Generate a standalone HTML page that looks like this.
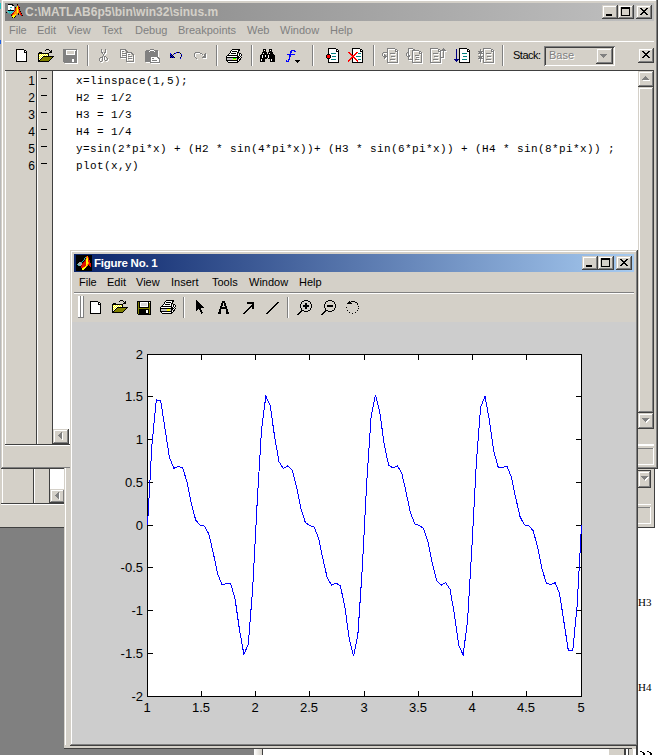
<!DOCTYPE html>
<html><head><meta charset="utf-8">
<style>
*{margin:0;padding:0;box-sizing:border-box}
html,body{width:658px;height:755px;overflow:hidden;background:#fff;position:relative;font-family:"Liberation Sans",sans-serif}
.a{position:absolute}
.t{white-space:pre;line-height:1}
.code{font-family:"Liberation Mono",monospace;font-size:11px;letter-spacing:0.4px;color:#000;white-space:pre;line-height:17px}
</style></head><body>
<div class="a" style="left:0px;top:0px;width:1px;height:470px;background:#b8b8b8;"></div>
<div class="a" style="left:0px;top:3px;width:1px;height:6px;background:#20c0c0;"></div>
<div class="a" style="left:0px;top:40px;width:1px;height:4px;background:#2060e0;"></div>
<div class="a" style="left:0px;top:527px;width:64px;height:228px;background:#808080;"></div>
<div class="a" style="left:0px;top:749px;width:254px;height:6px;background:#808080;"></div>
<div class="a" style="left:0px;top:468px;width:655px;height:60px;background:#d4d0c8;"></div>
<div class="a" style="left:654px;top:468px;width:1px;height:60px;background:#404040;"></div>
<div class="a" style="left:0px;top:527px;width:655px;height:1px;background:#404040;"></div>
<div class="a" style="left:2px;top:468px;width:1px;height:36px;background:#fff;"></div>
<div class="a" style="left:3px;top:468px;width:30px;height:35px;background:#d4d0c8;"></div>
<div class="a" style="left:33px;top:468px;width:1px;height:35px;background:#404040;"></div>
<div class="a" style="left:34px;top:468px;width:1px;height:35px;background:#fff;"></div>
<div class="a" style="left:49px;top:468px;width:1px;height:35px;background:#404040;"></div>
<div class="a" style="left:50px;top:468px;width:15px;height:35px;background:#fff;"></div>
<div class="a" style="left:50px;top:489px;width:15px;height:14px;background:#d4d0c8;box-shadow:inset -1px -1px #404040,inset 1px 1px #d4d0c8,inset -2px -2px #808080,inset 2px 2px #fff"></div>
<svg class="a" style="left:55px;top:492px" width="5" height="8" shape-rendering="crispEdges"><rect x="4" y="1" width="1" height="1" fill="#fff"/><rect x="3" y="2" width="2" height="1" fill="#fff"/><rect x="2" y="3" width="3" height="1" fill="#fff"/><rect x="1" y="4" width="4" height="1" fill="#fff"/><rect x="2" y="5" width="3" height="1" fill="#fff"/><rect x="3" y="6" width="2" height="1" fill="#fff"/><rect x="4" y="7" width="1" height="1" fill="#fff"/><rect x="3" y="0" width="1" height="1" fill="#808080"/><rect x="2" y="1" width="2" height="1" fill="#808080"/><rect x="1" y="2" width="3" height="1" fill="#808080"/><rect x="0" y="3" width="4" height="1" fill="#808080"/><rect x="1" y="4" width="3" height="1" fill="#808080"/><rect x="2" y="5" width="2" height="1" fill="#808080"/><rect x="3" y="6" width="1" height="1" fill="#808080"/></svg>
<div class="a" style="left:1px;top:503px;width:64px;height:1px;background:#404040;"></div>
<div class="a" style="left:1px;top:504px;width:64px;height:1px;background:#fff;"></div>
<div class="a" style="left:637px;top:470px;width:14px;height:1px;background:#404040;"></div>
<div class="a" style="left:638px;top:471px;width:13px;height:17px;background:#d4d0c8;box-shadow:inset -1px -1px #404040,inset 1px 1px #d4d0c8,inset -2px -2px #808080,inset 2px 2px #fff"></div>
<svg class="a" style="left:641px;top:476px" width="8" height="5" shape-rendering="crispEdges"><rect x="1" y="1" width="7" height="1" fill="#fff"/><rect x="2" y="2" width="5" height="1" fill="#fff"/><rect x="3" y="3" width="3" height="1" fill="#fff"/><rect x="4" y="4" width="1" height="1" fill="#fff"/><rect x="0" y="0" width="7" height="1" fill="#808080"/><rect x="1" y="1" width="5" height="1" fill="#808080"/><rect x="2" y="2" width="3" height="1" fill="#808080"/><rect x="3" y="3" width="1" height="1" fill="#808080"/></svg>
<div class="a" style="left:637px;top:504px;width:14px;height:1px;background:#fff;"></div>
<div class="a" style="left:637px;top:507px;width:13px;height:1px;background:#808080;"></div>
<div class="a" style="left:650px;top:507px;width:1px;height:17px;background:#fff;"></div>
<div class="a" style="left:637px;top:523px;width:14px;height:1px;background:#fff;"></div>
<div class="a" style="left:1px;top:0px;width:657px;height:469px;background:#d4d0c8;"></div>
<div class="a" style="left:2px;top:0px;width:655px;height:1px;background:#fff;"></div>
<div class="a" style="left:2px;top:0px;width:1px;height:467px;background:#fff;"></div>
<div class="a" style="left:656px;top:0px;width:1px;height:468px;background:#808080;"></div>
<div class="a" style="left:657px;top:0px;width:1px;height:469px;background:#404040;"></div>
<div class="a" style="left:2px;top:467px;width:655px;height:1px;background:#808080;"></div>
<div class="a" style="left:1px;top:468px;width:657px;height:1px;background:#404040;"></div>
<div class="a" style="left:5px;top:3px;width:649px;height:18px;background:linear-gradient(to right,#808080,#c0c0c0);"></div>
<div class="a t" style="left:25px;top:6px;font-size:12px;font-weight:bold;color:#d4d0c8">C:\MATLAB6p5\bin\win32\sinus.m</div>
<svg class="a" style="left:6px;top:4px" width="18" height="15" shape-rendering="crispEdges"><rect x="2" y="0" width="5" height="1" fill="#000"/><rect x="11" y="0" width="1" height="1" fill="#000"/><rect x="2" y="1" width="4" height="1" fill="#fff"/><rect x="6" y="1" width="2" height="1" fill="#000"/><rect x="11" y="1" width="1" height="1" fill="#a00000"/><rect x="2" y="2" width="6" height="1" fill="#fff"/><rect x="10" y="2" width="1" height="1" fill="#30b0b0"/><rect x="11" y="2" width="1" height="1" fill="#ffff00"/><rect x="12" y="2" width="1" height="1" fill="#e01000"/><rect x="2" y="3" width="2" height="1" fill="#fff"/><rect x="4" y="3" width="2" height="1" fill="#30b0b0"/><rect x="6" y="3" width="2" height="1" fill="#fff"/><rect x="9" y="3" width="1" height="1" fill="#000"/><rect x="10" y="3" width="1" height="1" fill="#ff9000"/><rect x="11" y="3" width="1" height="1" fill="#ffff00"/><rect x="12" y="3" width="1" height="1" fill="#e01000"/><rect x="13" y="3" width="1" height="1" fill="#000"/><rect x="2" y="4" width="6" height="1" fill="#fff"/><rect x="9" y="4" width="1" height="1" fill="#a00000"/><rect x="10" y="4" width="1" height="1" fill="#ff9000"/><rect x="11" y="4" width="1" height="1" fill="#ffff00"/><rect x="12" y="4" width="2" height="1" fill="#e01000"/><rect x="2" y="5" width="2" height="1" fill="#fff"/><rect x="4" y="5" width="1" height="1" fill="#30b0b0"/><rect x="5" y="5" width="3" height="1" fill="#fff"/><rect x="9" y="5" width="1" height="1" fill="#e01000"/><rect x="10" y="5" width="1" height="1" fill="#ff9000"/><rect x="11" y="5" width="1" height="1" fill="#ffff00"/><rect x="12" y="5" width="1" height="1" fill="#ff9000"/><rect x="13" y="5" width="1" height="1" fill="#000"/><rect x="2" y="6" width="6" height="1" fill="#000"/><rect x="9" y="6" width="1" height="1" fill="#e01000"/><rect x="10" y="6" width="1" height="1" fill="#ff9000"/><rect x="11" y="6" width="1" height="1" fill="#ffff00"/><rect x="12" y="6" width="1" height="1" fill="#ff9000"/><rect x="13" y="6" width="1" height="1" fill="#e01000"/><rect x="1" y="7" width="2" height="1" fill="#40d0d0"/><rect x="3" y="7" width="1" height="1" fill="#30b0b0"/><rect x="4" y="7" width="2" height="1" fill="#40d0d0"/><rect x="6" y="7" width="1" height="1" fill="#30b0b0"/><rect x="7" y="7" width="1" height="1" fill="#40d0d0"/><rect x="8" y="7" width="1" height="1" fill="#a00000"/><rect x="9" y="7" width="2" height="1" fill="#ff9000"/><rect x="11" y="7" width="1" height="1" fill="#ffff00"/><rect x="12" y="7" width="1" height="1" fill="#ff9000"/><rect x="13" y="7" width="1" height="1" fill="#e01000"/><rect x="14" y="7" width="1" height="1" fill="#000"/><rect x="0" y="8" width="1" height="1" fill="#000"/><rect x="2" y="8" width="1" height="1" fill="#40d0d0"/><rect x="3" y="8" width="1" height="1" fill="#30b0b0"/><rect x="4" y="8" width="1" height="1" fill="#40d0d0"/><rect x="5" y="8" width="1" height="1" fill="#30b0b0"/><rect x="6" y="8" width="1" height="1" fill="#40d0d0"/><rect x="7" y="8" width="1" height="1" fill="#e01000"/><rect x="8" y="8" width="3" height="1" fill="#ff9000"/><rect x="11" y="8" width="1" height="1" fill="#ffff00"/><rect x="12" y="8" width="1" height="1" fill="#ff9000"/><rect x="13" y="8" width="2" height="1" fill="#e01000"/><rect x="3" y="9" width="2" height="1" fill="#30b0b0"/><rect x="5" y="9" width="1" height="1" fill="#40d0d0"/><rect x="6" y="9" width="1" height="1" fill="#a00000"/><rect x="7" y="9" width="1" height="1" fill="#e01000"/><rect x="8" y="9" width="4" height="1" fill="#ff9000"/><rect x="12" y="9" width="1" height="1" fill="#000"/><rect x="13" y="9" width="1" height="1" fill="#ff9000"/><rect x="14" y="9" width="1" height="1" fill="#e01000"/><rect x="15" y="9" width="1" height="1" fill="#000"/><rect x="5" y="10" width="1" height="1" fill="#a00000"/><rect x="6" y="10" width="1" height="1" fill="#e01000"/><rect x="7" y="10" width="2" height="1" fill="#ff9000"/><rect x="9" y="10" width="1" height="1" fill="#ffff00"/><rect x="10" y="10" width="1" height="1" fill="#ff9000"/><rect x="12" y="10" width="1" height="1" fill="#000"/><rect x="14" y="10" width="2" height="1" fill="#e01000"/><rect x="5" y="11" width="1" height="1" fill="#000"/><rect x="6" y="11" width="1" height="1" fill="#ff9000"/><rect x="7" y="11" width="2" height="1" fill="#ffff00"/><rect x="9" y="11" width="1" height="1" fill="#ff9000"/><rect x="15" y="11" width="1" height="1" fill="#a00000"/><rect x="16" y="11" width="1" height="1" fill="#000"/><rect x="6" y="12" width="3" height="1" fill="#ffff00"/><rect x="9" y="12" width="1" height="1" fill="#000"/><rect x="6" y="13" width="1" height="1" fill="#000"/><rect x="7" y="13" width="1" height="1" fill="#ffff00"/><rect x="8" y="13" width="1" height="1" fill="#000"/></svg>
<div class="a" style="left:602px;top:5px;width:16px;height:14px;background:#d4d0c8;box-shadow:inset -1px -1px #404040,inset 1px 1px #d4d0c8,inset -2px -2px #808080,inset 2px 2px #fff"></div>
<div class="a" style="left:618px;top:5px;width:16px;height:14px;background:#d4d0c8;box-shadow:inset -1px -1px #404040,inset 1px 1px #d4d0c8,inset -2px -2px #808080,inset 2px 2px #fff"></div>
<div class="a" style="left:636px;top:5px;width:16px;height:14px;background:#d4d0c8;box-shadow:inset -1px -1px #404040,inset 1px 1px #d4d0c8,inset -2px -2px #808080,inset 2px 2px #fff"></div>
<div class="a" style="left:606px;top:14px;width:6px;height:2px;background:#000;"></div>
<div class="a" style="left:621px;top:7px;width:9px;height:9px;border:1px solid #000;border-top-width:2px"></div>
<svg class="a" style="left:640px;top:8px" width="9" height="8" shape-rendering="crispEdges"><rect x="0" y="0" width="2" height="1" fill="#000"/><rect x="6" y="0" width="2" height="1" fill="#000"/><rect x="1" y="1" width="2" height="1" fill="#000"/><rect x="5" y="1" width="2" height="1" fill="#000"/><rect x="2" y="2" width="4" height="1" fill="#000"/><rect x="3" y="3" width="2" height="1" fill="#000"/><rect x="2" y="4" width="4" height="1" fill="#000"/><rect x="1" y="5" width="2" height="1" fill="#000"/><rect x="5" y="5" width="2" height="1" fill="#000"/><rect x="0" y="6" width="2" height="1" fill="#000"/><rect x="6" y="6" width="2" height="1" fill="#000"/></svg>
<div class="a t" style="left:9px;top:25px;font-size:11px;color:#808080">File</div>
<div class="a t" style="left:37px;top:25px;font-size:11px;color:#808080">Edit</div>
<div class="a t" style="left:67px;top:25px;font-size:11px;color:#808080">View</div>
<div class="a t" style="left:102px;top:25px;font-size:11px;color:#808080">Text</div>
<div class="a t" style="left:135px;top:25px;font-size:11px;color:#808080">Debug</div>
<div class="a t" style="left:178px;top:25px;font-size:11px;color:#808080">Breakpoints</div>
<div class="a t" style="left:247px;top:25px;font-size:11px;color:#808080">Web</div>
<div class="a t" style="left:280px;top:25px;font-size:11px;color:#808080">Window</div>
<div class="a t" style="left:330px;top:25px;font-size:11px;color:#808080">Help</div>
<div class="a" style="left:5px;top:41px;width:649px;height:1px;background:#fff;"></div>
<div class="a" style="left:87px;top:45px;width:1px;height:21px;background:#808080;"></div>
<div class="a" style="left:88px;top:45px;width:1px;height:21px;background:#fff;"></div>
<div class="a" style="left:216px;top:45px;width:1px;height:21px;background:#808080;"></div>
<div class="a" style="left:217px;top:45px;width:1px;height:21px;background:#fff;"></div>
<div class="a" style="left:251px;top:45px;width:1px;height:21px;background:#808080;"></div>
<div class="a" style="left:252px;top:45px;width:1px;height:21px;background:#fff;"></div>
<div class="a" style="left:312px;top:45px;width:1px;height:21px;background:#808080;"></div>
<div class="a" style="left:313px;top:45px;width:1px;height:21px;background:#fff;"></div>
<div class="a" style="left:373px;top:45px;width:1px;height:21px;background:#808080;"></div>
<div class="a" style="left:374px;top:45px;width:1px;height:21px;background:#fff;"></div>
<div class="a" style="left:502px;top:45px;width:1px;height:21px;background:#808080;"></div>
<div class="a" style="left:503px;top:45px;width:1px;height:21px;background:#fff;"></div>
<svg class="a" style="left:16px;top:49px" width="12" height="14" shape-rendering="crispEdges"><rect x="0" y="0" width="8" height="1" fill="#000"/><rect x="0" y="1" width="1" height="1" fill="#000"/><rect x="1" y="1" width="7" height="1" fill="#fff"/><rect x="8" y="1" width="2" height="1" fill="#000"/><rect x="0" y="2" width="1" height="1" fill="#000"/><rect x="1" y="2" width="7" height="1" fill="#fff"/><rect x="8" y="2" width="1" height="1" fill="#000"/><rect x="9" y="2" width="1" height="1" fill="#fff"/><rect x="10" y="2" width="1" height="1" fill="#000"/><rect x="0" y="3" width="1" height="1" fill="#000"/><rect x="1" y="3" width="7" height="1" fill="#fff"/><rect x="8" y="3" width="3" height="1" fill="#000"/><rect x="0" y="4" width="1" height="1" fill="#000"/><rect x="1" y="4" width="9" height="1" fill="#fff"/><rect x="10" y="4" width="1" height="1" fill="#000"/><rect x="0" y="5" width="1" height="1" fill="#000"/><rect x="1" y="5" width="9" height="1" fill="#fff"/><rect x="10" y="5" width="1" height="1" fill="#000"/><rect x="0" y="6" width="1" height="1" fill="#000"/><rect x="1" y="6" width="9" height="1" fill="#fff"/><rect x="10" y="6" width="1" height="1" fill="#000"/><rect x="0" y="7" width="1" height="1" fill="#000"/><rect x="1" y="7" width="9" height="1" fill="#fff"/><rect x="10" y="7" width="1" height="1" fill="#000"/><rect x="0" y="8" width="1" height="1" fill="#000"/><rect x="1" y="8" width="9" height="1" fill="#fff"/><rect x="10" y="8" width="1" height="1" fill="#000"/><rect x="0" y="9" width="1" height="1" fill="#000"/><rect x="1" y="9" width="9" height="1" fill="#fff"/><rect x="10" y="9" width="1" height="1" fill="#000"/><rect x="0" y="10" width="1" height="1" fill="#000"/><rect x="1" y="10" width="9" height="1" fill="#fff"/><rect x="10" y="10" width="1" height="1" fill="#000"/><rect x="0" y="11" width="1" height="1" fill="#000"/><rect x="1" y="11" width="9" height="1" fill="#fff"/><rect x="10" y="11" width="1" height="1" fill="#000"/><rect x="0" y="12" width="11" height="1" fill="#000"/></svg>
<svg class="a" style="left:38px;top:49px" width="17" height="14" shape-rendering="crispEdges"><rect x="8" y="0" width="3" height="1" fill="#000"/><rect x="7" y="1" width="1" height="1" fill="#000"/><rect x="11" y="1" width="1" height="1" fill="#000"/><rect x="13" y="1" width="1" height="1" fill="#000"/><rect x="12" y="2" width="2" height="1" fill="#000"/><rect x="1" y="3" width="3" height="1" fill="#000"/><rect x="11" y="3" width="3" height="1" fill="#000"/><rect x="0" y="4" width="11" height="1" fill="#000"/><rect x="0" y="5" width="1" height="1" fill="#000"/><rect x="1" y="5" width="1" height="1" fill="#ffff00"/><rect x="2" y="5" width="1" height="1" fill="#fff"/><rect x="3" y="5" width="1" height="1" fill="#ffff00"/><rect x="4" y="5" width="1" height="1" fill="#fff"/><rect x="5" y="5" width="1" height="1" fill="#ffff00"/><rect x="6" y="5" width="1" height="1" fill="#fff"/><rect x="7" y="5" width="1" height="1" fill="#ffff00"/><rect x="8" y="5" width="1" height="1" fill="#fff"/><rect x="9" y="5" width="1" height="1" fill="#ffff00"/><rect x="10" y="5" width="1" height="1" fill="#000"/><rect x="0" y="6" width="1" height="1" fill="#000"/><rect x="1" y="6" width="1" height="1" fill="#fff"/><rect x="2" y="6" width="1" height="1" fill="#ffff00"/><rect x="3" y="6" width="1" height="1" fill="#fff"/><rect x="4" y="6" width="1" height="1" fill="#ffff00"/><rect x="5" y="6" width="1" height="1" fill="#fff"/><rect x="6" y="6" width="1" height="1" fill="#ffff00"/><rect x="7" y="6" width="1" height="1" fill="#fff"/><rect x="8" y="6" width="1" height="1" fill="#ffff00"/><rect x="9" y="6" width="1" height="1" fill="#fff"/><rect x="10" y="6" width="1" height="1" fill="#000"/><rect x="0" y="7" width="1" height="1" fill="#000"/><rect x="1" y="7" width="1" height="1" fill="#ffff00"/><rect x="2" y="7" width="1" height="1" fill="#fff"/><rect x="3" y="7" width="1" height="1" fill="#ffff00"/><rect x="4" y="7" width="1" height="1" fill="#fff"/><rect x="5" y="7" width="11" height="1" fill="#000"/><rect x="0" y="8" width="1" height="1" fill="#000"/><rect x="1" y="8" width="1" height="1" fill="#fff"/><rect x="2" y="8" width="1" height="1" fill="#ffff00"/><rect x="3" y="8" width="1" height="1" fill="#fff"/><rect x="4" y="8" width="1" height="1" fill="#000"/><rect x="5" y="8" width="9" height="1" fill="#808000"/><rect x="14" y="8" width="1" height="1" fill="#000"/><rect x="0" y="9" width="1" height="1" fill="#000"/><rect x="1" y="9" width="1" height="1" fill="#ffff00"/><rect x="2" y="9" width="1" height="1" fill="#fff"/><rect x="3" y="9" width="1" height="1" fill="#000"/><rect x="4" y="9" width="9" height="1" fill="#808000"/><rect x="13" y="9" width="1" height="1" fill="#000"/><rect x="0" y="10" width="1" height="1" fill="#000"/><rect x="1" y="10" width="1" height="1" fill="#fff"/><rect x="2" y="10" width="1" height="1" fill="#000"/><rect x="3" y="10" width="9" height="1" fill="#808000"/><rect x="12" y="10" width="1" height="1" fill="#000"/><rect x="0" y="11" width="2" height="1" fill="#000"/><rect x="2" y="11" width="9" height="1" fill="#808000"/><rect x="11" y="11" width="1" height="1" fill="#000"/><rect x="0" y="12" width="11" height="1" fill="#000"/></svg>
<svg class="a" style="left:63px;top:49px" width="16" height="16" shape-rendering="crispEdges"><rect x="0" y="0" width="14" height="1" fill="#808080"/><rect x="0" y="1" width="3" height="1" fill="#808080"/><rect x="3" y="1" width="10" height="1" fill="#fff"/><rect x="13" y="1" width="1" height="1" fill="#808080"/><rect x="14" y="1" width="1" height="1" fill="#fff"/><rect x="0" y="2" width="3" height="1" fill="#808080"/><rect x="3" y="2" width="1" height="1" fill="#fff"/><rect x="4" y="2" width="7" height="1" fill="#d4d0c8"/><rect x="11" y="2" width="1" height="1" fill="#fff"/><rect x="12" y="2" width="2" height="1" fill="#808080"/><rect x="14" y="2" width="1" height="1" fill="#fff"/><rect x="0" y="3" width="3" height="1" fill="#808080"/><rect x="3" y="3" width="1" height="1" fill="#fff"/><rect x="4" y="3" width="7" height="1" fill="#d4d0c8"/><rect x="11" y="3" width="1" height="1" fill="#fff"/><rect x="12" y="3" width="2" height="1" fill="#808080"/><rect x="14" y="3" width="1" height="1" fill="#fff"/><rect x="0" y="4" width="3" height="1" fill="#808080"/><rect x="3" y="4" width="1" height="1" fill="#fff"/><rect x="4" y="4" width="7" height="1" fill="#d4d0c8"/><rect x="11" y="4" width="1" height="1" fill="#fff"/><rect x="12" y="4" width="2" height="1" fill="#808080"/><rect x="14" y="4" width="1" height="1" fill="#fff"/><rect x="0" y="5" width="3" height="1" fill="#808080"/><rect x="3" y="5" width="9" height="1" fill="#fff"/><rect x="12" y="5" width="2" height="1" fill="#808080"/><rect x="14" y="5" width="1" height="1" fill="#fff"/><rect x="0" y="6" width="14" height="1" fill="#808080"/><rect x="14" y="6" width="1" height="1" fill="#fff"/><rect x="0" y="7" width="14" height="1" fill="#808080"/><rect x="14" y="7" width="1" height="1" fill="#fff"/><rect x="0" y="8" width="14" height="1" fill="#808080"/><rect x="14" y="8" width="1" height="1" fill="#fff"/><rect x="0" y="9" width="14" height="1" fill="#808080"/><rect x="14" y="9" width="1" height="1" fill="#fff"/><rect x="0" y="10" width="9" height="1" fill="#808080"/><rect x="9" y="10" width="2" height="1" fill="#fff"/><rect x="11" y="10" width="3" height="1" fill="#808080"/><rect x="14" y="10" width="1" height="1" fill="#fff"/><rect x="0" y="11" width="9" height="1" fill="#808080"/><rect x="9" y="11" width="2" height="1" fill="#fff"/><rect x="11" y="11" width="3" height="1" fill="#808080"/><rect x="14" y="11" width="1" height="1" fill="#fff"/><rect x="0" y="12" width="9" height="1" fill="#808080"/><rect x="9" y="12" width="2" height="1" fill="#fff"/><rect x="11" y="12" width="3" height="1" fill="#808080"/><rect x="14" y="12" width="1" height="1" fill="#fff"/><rect x="1" y="13" width="13" height="1" fill="#808080"/><rect x="14" y="13" width="1" height="1" fill="#fff"/><rect x="2" y="14" width="13" height="1" fill="#fff"/></svg>
<svg class="a" style="left:99px;top:49px" width="10" height="14" shape-rendering="crispEdges"><rect x="3" y="1" width="1" height="1" fill="#fff"/><rect x="7" y="1" width="1" height="1" fill="#fff"/><rect x="3" y="2" width="1" height="1" fill="#fff"/><rect x="7" y="2" width="1" height="1" fill="#fff"/><rect x="3" y="3" width="1" height="1" fill="#fff"/><rect x="7" y="3" width="1" height="1" fill="#fff"/><rect x="3" y="4" width="2" height="1" fill="#fff"/><rect x="6" y="4" width="2" height="1" fill="#fff"/><rect x="4" y="5" width="1" height="1" fill="#fff"/><rect x="6" y="5" width="1" height="1" fill="#fff"/><rect x="5" y="6" width="1" height="1" fill="#fff"/><rect x="5" y="7" width="1" height="1" fill="#fff"/><rect x="4" y="8" width="1" height="1" fill="#fff"/><rect x="6" y="8" width="2" height="1" fill="#fff"/><rect x="2" y="9" width="3" height="1" fill="#fff"/><rect x="6" y="9" width="1" height="1" fill="#fff"/><rect x="8" y="9" width="1" height="1" fill="#fff"/><rect x="1" y="10" width="1" height="1" fill="#fff"/><rect x="4" y="10" width="1" height="1" fill="#fff"/><rect x="6" y="10" width="1" height="1" fill="#fff"/><rect x="9" y="10" width="1" height="1" fill="#fff"/><rect x="1" y="11" width="1" height="1" fill="#fff"/><rect x="4" y="11" width="1" height="1" fill="#fff"/><rect x="6" y="11" width="1" height="1" fill="#fff"/><rect x="9" y="11" width="1" height="1" fill="#fff"/><rect x="1" y="12" width="1" height="1" fill="#fff"/><rect x="4" y="12" width="1" height="1" fill="#fff"/><rect x="7" y="12" width="2" height="1" fill="#fff"/><rect x="2" y="13" width="2" height="1" fill="#fff"/><rect x="2" y="0" width="1" height="1" fill="#808080"/><rect x="6" y="0" width="1" height="1" fill="#808080"/><rect x="2" y="1" width="1" height="1" fill="#808080"/><rect x="6" y="1" width="1" height="1" fill="#808080"/><rect x="2" y="2" width="1" height="1" fill="#808080"/><rect x="6" y="2" width="1" height="1" fill="#808080"/><rect x="2" y="3" width="2" height="1" fill="#808080"/><rect x="5" y="3" width="2" height="1" fill="#808080"/><rect x="3" y="4" width="1" height="1" fill="#808080"/><rect x="5" y="4" width="1" height="1" fill="#808080"/><rect x="4" y="5" width="1" height="1" fill="#808080"/><rect x="4" y="6" width="1" height="1" fill="#808080"/><rect x="3" y="7" width="1" height="1" fill="#808080"/><rect x="5" y="7" width="2" height="1" fill="#808080"/><rect x="1" y="8" width="3" height="1" fill="#808080"/><rect x="5" y="8" width="1" height="1" fill="#808080"/><rect x="7" y="8" width="1" height="1" fill="#808080"/><rect x="0" y="9" width="1" height="1" fill="#808080"/><rect x="3" y="9" width="1" height="1" fill="#808080"/><rect x="5" y="9" width="1" height="1" fill="#808080"/><rect x="8" y="9" width="1" height="1" fill="#808080"/><rect x="0" y="10" width="1" height="1" fill="#808080"/><rect x="3" y="10" width="1" height="1" fill="#808080"/><rect x="5" y="10" width="1" height="1" fill="#808080"/><rect x="8" y="10" width="1" height="1" fill="#808080"/><rect x="0" y="11" width="1" height="1" fill="#808080"/><rect x="3" y="11" width="1" height="1" fill="#808080"/><rect x="6" y="11" width="2" height="1" fill="#808080"/><rect x="1" y="12" width="2" height="1" fill="#808080"/></svg>
<svg class="a" style="left:120px;top:49px" width="16" height="14" shape-rendering="crispEdges"><rect x="1" y="1" width="6" height="1" fill="#fff"/><rect x="1" y="2" width="1" height="1" fill="#fff"/><rect x="6" y="2" width="2" height="1" fill="#fff"/><rect x="1" y="3" width="1" height="1" fill="#fff"/><rect x="3" y="3" width="2" height="1" fill="#fff"/><rect x="7" y="3" width="2" height="1" fill="#fff"/><rect x="1" y="4" width="1" height="1" fill="#fff"/><rect x="7" y="4" width="6" height="1" fill="#fff"/><rect x="1" y="5" width="1" height="1" fill="#fff"/><rect x="3" y="5" width="5" height="1" fill="#fff"/><rect x="12" y="5" width="2" height="1" fill="#fff"/><rect x="1" y="6" width="1" height="1" fill="#fff"/><rect x="7" y="6" width="1" height="1" fill="#fff"/><rect x="9" y="6" width="2" height="1" fill="#fff"/><rect x="13" y="6" width="2" height="1" fill="#fff"/><rect x="1" y="7" width="1" height="1" fill="#fff"/><rect x="3" y="7" width="5" height="1" fill="#fff"/><rect x="14" y="7" width="1" height="1" fill="#fff"/><rect x="1" y="8" width="1" height="1" fill="#fff"/><rect x="7" y="8" width="1" height="1" fill="#fff"/><rect x="9" y="8" width="4" height="1" fill="#fff"/><rect x="14" y="8" width="1" height="1" fill="#fff"/><rect x="1" y="9" width="7" height="1" fill="#fff"/><rect x="14" y="9" width="1" height="1" fill="#fff"/><rect x="7" y="10" width="1" height="1" fill="#fff"/><rect x="9" y="10" width="4" height="1" fill="#fff"/><rect x="14" y="10" width="1" height="1" fill="#fff"/><rect x="7" y="11" width="1" height="1" fill="#fff"/><rect x="14" y="11" width="1" height="1" fill="#fff"/><rect x="7" y="12" width="1" height="1" fill="#fff"/><rect x="14" y="12" width="1" height="1" fill="#fff"/><rect x="7" y="13" width="8" height="1" fill="#fff"/><rect x="0" y="0" width="6" height="1" fill="#808080"/><rect x="0" y="1" width="1" height="1" fill="#808080"/><rect x="5" y="1" width="2" height="1" fill="#808080"/><rect x="0" y="2" width="1" height="1" fill="#808080"/><rect x="2" y="2" width="2" height="1" fill="#808080"/><rect x="6" y="2" width="2" height="1" fill="#808080"/><rect x="0" y="3" width="1" height="1" fill="#808080"/><rect x="6" y="3" width="6" height="1" fill="#808080"/><rect x="0" y="4" width="1" height="1" fill="#808080"/><rect x="2" y="4" width="5" height="1" fill="#808080"/><rect x="11" y="4" width="2" height="1" fill="#808080"/><rect x="0" y="5" width="1" height="1" fill="#808080"/><rect x="6" y="5" width="1" height="1" fill="#808080"/><rect x="8" y="5" width="2" height="1" fill="#808080"/><rect x="12" y="5" width="2" height="1" fill="#808080"/><rect x="0" y="6" width="1" height="1" fill="#808080"/><rect x="2" y="6" width="5" height="1" fill="#808080"/><rect x="13" y="6" width="1" height="1" fill="#808080"/><rect x="0" y="7" width="1" height="1" fill="#808080"/><rect x="6" y="7" width="1" height="1" fill="#808080"/><rect x="8" y="7" width="4" height="1" fill="#808080"/><rect x="13" y="7" width="1" height="1" fill="#808080"/><rect x="0" y="8" width="7" height="1" fill="#808080"/><rect x="13" y="8" width="1" height="1" fill="#808080"/><rect x="6" y="9" width="1" height="1" fill="#808080"/><rect x="8" y="9" width="4" height="1" fill="#808080"/><rect x="13" y="9" width="1" height="1" fill="#808080"/><rect x="6" y="10" width="1" height="1" fill="#808080"/><rect x="13" y="10" width="1" height="1" fill="#808080"/><rect x="6" y="11" width="1" height="1" fill="#808080"/><rect x="13" y="11" width="1" height="1" fill="#808080"/><rect x="6" y="12" width="8" height="1" fill="#808080"/></svg>
<svg class="a" style="left:144px;top:49px" width="17" height="16" shape-rendering="crispEdges"><rect x="6" y="0" width="4" height="1" fill="#808080"/><rect x="2" y="1" width="4" height="1" fill="#808080"/><rect x="6" y="1" width="4" height="1" fill="#fff"/><rect x="10" y="1" width="4" height="1" fill="#808080"/><rect x="1" y="2" width="4" height="1" fill="#808080"/><rect x="5" y="2" width="1" height="1" fill="#fff"/><rect x="6" y="2" width="4" height="1" fill="#808080"/><rect x="10" y="2" width="1" height="1" fill="#fff"/><rect x="11" y="2" width="3" height="1" fill="#808080"/><rect x="14" y="2" width="1" height="1" fill="#fff"/><rect x="1" y="3" width="13" height="1" fill="#808080"/><rect x="14" y="3" width="1" height="1" fill="#fff"/><rect x="1" y="4" width="13" height="1" fill="#808080"/><rect x="14" y="4" width="1" height="1" fill="#fff"/><rect x="1" y="5" width="13" height="1" fill="#808080"/><rect x="14" y="5" width="1" height="1" fill="#fff"/><rect x="1" y="6" width="13" height="1" fill="#808080"/><rect x="14" y="6" width="1" height="1" fill="#fff"/><rect x="1" y="7" width="13" height="1" fill="#808080"/><rect x="14" y="7" width="1" height="1" fill="#fff"/><rect x="1" y="8" width="6" height="1" fill="#808080"/><rect x="7" y="8" width="6" height="1" fill="#fff"/><rect x="13" y="8" width="2" height="1" fill="#808080"/><rect x="1" y="9" width="6" height="1" fill="#808080"/><rect x="7" y="9" width="1" height="1" fill="#fff"/><rect x="8" y="9" width="2" height="1" fill="#808080"/><rect x="10" y="9" width="4" height="1" fill="#fff"/><rect x="14" y="9" width="2" height="1" fill="#808080"/><rect x="1" y="10" width="6" height="1" fill="#808080"/><rect x="7" y="10" width="8" height="1" fill="#fff"/><rect x="15" y="10" width="1" height="1" fill="#808080"/><rect x="1" y="11" width="6" height="1" fill="#808080"/><rect x="7" y="11" width="1" height="1" fill="#fff"/><rect x="8" y="11" width="5" height="1" fill="#808080"/><rect x="13" y="11" width="2" height="1" fill="#fff"/><rect x="15" y="11" width="1" height="1" fill="#808080"/><rect x="1" y="12" width="6" height="1" fill="#808080"/><rect x="7" y="12" width="8" height="1" fill="#fff"/><rect x="15" y="12" width="1" height="1" fill="#808080"/><rect x="2" y="13" width="4" height="1" fill="#fff"/><rect x="6" y="13" width="10" height="1" fill="#808080"/><rect x="7" y="14" width="9" height="1" fill="#fff"/></svg>
<svg class="a" style="left:170px;top:52px" width="13" height="8" shape-rendering="crispEdges"><rect x="6" y="0" width="1" height="1" fill="#0000ff"/><rect x="7" y="0" width="2" height="1" fill="#000"/><rect x="9" y="0" width="1" height="1" fill="#0000ff"/><rect x="0" y="1" width="1" height="1" fill="#0000ff"/><rect x="4" y="1" width="1" height="1" fill="#000"/><rect x="5" y="1" width="1" height="1" fill="#0000ff"/><rect x="10" y="1" width="1" height="1" fill="#000"/><rect x="0" y="2" width="1" height="1" fill="#0000ff"/><rect x="1" y="2" width="1" height="1" fill="#000"/><rect x="3" y="2" width="1" height="1" fill="#0000ff"/><rect x="11" y="2" width="1" height="1" fill="#0000ff"/><rect x="0" y="3" width="1" height="1" fill="#000"/><rect x="1" y="3" width="1" height="1" fill="#0000ff"/><rect x="2" y="3" width="1" height="1" fill="#000"/><rect x="11" y="3" width="1" height="1" fill="#000"/><rect x="0" y="4" width="1" height="1" fill="#0000ff"/><rect x="1" y="4" width="1" height="1" fill="#000"/><rect x="2" y="4" width="1" height="1" fill="#0000ff"/><rect x="3" y="4" width="1" height="1" fill="#000"/><rect x="11" y="4" width="1" height="1" fill="#0000ff"/><rect x="0" y="5" width="1" height="1" fill="#000"/><rect x="1" y="5" width="1" height="1" fill="#0000ff"/><rect x="2" y="5" width="1" height="1" fill="#000"/><rect x="3" y="5" width="1" height="1" fill="#0000ff"/><rect x="4" y="5" width="1" height="1" fill="#000"/><rect x="10" y="5" width="1" height="1" fill="#000"/><rect x="10" y="6" width="1" height="1" fill="#0000ff"/></svg>
<svg class="a" style="left:194px;top:52px" width="13" height="8" shape-rendering="crispEdges"><rect x="2" y="1" width="5" height="1" fill="#fff"/><rect x="1" y="2" width="1" height="1" fill="#fff"/><rect x="7" y="2" width="2" height="1" fill="#fff"/><rect x="12" y="2" width="1" height="1" fill="#fff"/><rect x="1" y="3" width="1" height="1" fill="#fff"/><rect x="9" y="3" width="1" height="1" fill="#fff"/><rect x="11" y="3" width="2" height="1" fill="#fff"/><rect x="1" y="4" width="1" height="1" fill="#fff"/><rect x="11" y="4" width="2" height="1" fill="#fff"/><rect x="1" y="5" width="1" height="1" fill="#fff"/><rect x="10" y="5" width="3" height="1" fill="#fff"/><rect x="2" y="6" width="1" height="1" fill="#fff"/><rect x="9" y="6" width="4" height="1" fill="#fff"/><rect x="3" y="7" width="1" height="1" fill="#fff"/><rect x="1" y="0" width="5" height="1" fill="#808080"/><rect x="0" y="1" width="1" height="1" fill="#808080"/><rect x="6" y="1" width="2" height="1" fill="#808080"/><rect x="11" y="1" width="1" height="1" fill="#808080"/><rect x="0" y="2" width="1" height="1" fill="#808080"/><rect x="8" y="2" width="1" height="1" fill="#808080"/><rect x="10" y="2" width="2" height="1" fill="#808080"/><rect x="0" y="3" width="1" height="1" fill="#808080"/><rect x="10" y="3" width="2" height="1" fill="#808080"/><rect x="0" y="4" width="1" height="1" fill="#808080"/><rect x="9" y="4" width="3" height="1" fill="#808080"/><rect x="1" y="5" width="1" height="1" fill="#808080"/><rect x="8" y="5" width="4" height="1" fill="#808080"/><rect x="2" y="6" width="1" height="1" fill="#808080"/></svg>
<svg class="a" style="left:226px;top:49px" width="17" height="15" shape-rendering="crispEdges"><rect x="6" y="0" width="8" height="1" fill="#000"/><rect x="5" y="1" width="1" height="1" fill="#000"/><rect x="6" y="1" width="6" height="1" fill="#fff"/><rect x="12" y="1" width="2" height="1" fill="#000"/><rect x="4" y="2" width="1" height="1" fill="#000"/><rect x="5" y="2" width="1" height="1" fill="#fff"/><rect x="6" y="2" width="5" height="1" fill="#000"/><rect x="11" y="2" width="1" height="1" fill="#fff"/><rect x="12" y="2" width="1" height="1" fill="#000"/><rect x="4" y="3" width="1" height="1" fill="#000"/><rect x="5" y="3" width="6" height="1" fill="#fff"/><rect x="11" y="3" width="2" height="1" fill="#000"/><rect x="3" y="4" width="1" height="1" fill="#000"/><rect x="4" y="4" width="1" height="1" fill="#fff"/><rect x="5" y="4" width="5" height="1" fill="#000"/><rect x="10" y="4" width="1" height="1" fill="#fff"/><rect x="11" y="4" width="1" height="1" fill="#000"/><rect x="13" y="4" width="2" height="1" fill="#000"/><rect x="2" y="5" width="1" height="1" fill="#000"/><rect x="3" y="5" width="8" height="1" fill="#fff"/><rect x="11" y="5" width="1" height="1" fill="#000"/><rect x="12" y="5" width="1" height="1" fill="#fff"/><rect x="13" y="5" width="1" height="1" fill="#000"/><rect x="14" y="5" width="1" height="1" fill="#fff"/><rect x="15" y="5" width="1" height="1" fill="#000"/><rect x="1" y="6" width="11" height="1" fill="#000"/><rect x="12" y="6" width="1" height="1" fill="#fff"/><rect x="13" y="6" width="1" height="1" fill="#000"/><rect x="14" y="6" width="1" height="1" fill="#fff"/><rect x="15" y="6" width="1" height="1" fill="#000"/><rect x="0" y="7" width="1" height="1" fill="#000"/><rect x="1" y="7" width="10" height="1" fill="#fff"/><rect x="11" y="7" width="2" height="1" fill="#000"/><rect x="13" y="7" width="1" height="1" fill="#fff"/><rect x="14" y="7" width="1" height="1" fill="#000"/><rect x="0" y="8" width="14" height="1" fill="#000"/><rect x="14" y="8" width="1" height="1" fill="#fff"/><rect x="15" y="8" width="1" height="1" fill="#000"/><rect x="0" y="9" width="1" height="1" fill="#000"/><rect x="1" y="9" width="6" height="1" fill="#c0c0c0"/><rect x="7" y="9" width="3" height="1" fill="#00ff00"/><rect x="10" y="9" width="1" height="1" fill="#c0c0c0"/><rect x="11" y="9" width="2" height="1" fill="#000"/><rect x="13" y="9" width="1" height="1" fill="#fff"/><rect x="14" y="9" width="1" height="1" fill="#000"/><rect x="0" y="10" width="1" height="1" fill="#000"/><rect x="1" y="10" width="6" height="1" fill="#c0c0c0"/><rect x="7" y="10" width="3" height="1" fill="#ffff00"/><rect x="10" y="10" width="1" height="1" fill="#c0c0c0"/><rect x="11" y="10" width="1" height="1" fill="#000"/><rect x="13" y="10" width="2" height="1" fill="#000"/><rect x="0" y="11" width="12" height="1" fill="#000"/><rect x="12" y="11" width="1" height="1" fill="#fff"/><rect x="13" y="11" width="1" height="1" fill="#000"/><rect x="1" y="12" width="1" height="1" fill="#000"/><rect x="2" y="12" width="9" height="1" fill="#fff"/><rect x="11" y="12" width="2" height="1" fill="#000"/><rect x="2" y="13" width="10" height="1" fill="#000"/></svg>
<svg class="a" style="left:260px;top:49px" width="16" height="14" shape-rendering="crispEdges"><rect x="3" y="0" width="3" height="1" fill="#000"/><rect x="9" y="0" width="3" height="1" fill="#000"/><rect x="3" y="1" width="1" height="1" fill="#000"/><rect x="4" y="1" width="1" height="1" fill="#fff"/><rect x="5" y="1" width="1" height="1" fill="#000"/><rect x="9" y="1" width="1" height="1" fill="#000"/><rect x="10" y="1" width="1" height="1" fill="#fff"/><rect x="11" y="1" width="1" height="1" fill="#000"/><rect x="3" y="2" width="3" height="1" fill="#000"/><rect x="9" y="2" width="3" height="1" fill="#000"/><rect x="2" y="3" width="5" height="1" fill="#000"/><rect x="8" y="3" width="5" height="1" fill="#000"/><rect x="2" y="4" width="1" height="1" fill="#000"/><rect x="3" y="4" width="1" height="1" fill="#fff"/><rect x="4" y="4" width="3" height="1" fill="#000"/><rect x="8" y="4" width="1" height="1" fill="#000"/><rect x="9" y="4" width="1" height="1" fill="#fff"/><rect x="10" y="4" width="3" height="1" fill="#000"/><rect x="1" y="5" width="13" height="1" fill="#000"/><rect x="0" y="6" width="2" height="1" fill="#000"/><rect x="2" y="6" width="1" height="1" fill="#fff"/><rect x="3" y="6" width="2" height="1" fill="#000"/><rect x="5" y="6" width="1" height="1" fill="#fff"/><rect x="6" y="6" width="2" height="1" fill="#000"/><rect x="8" y="6" width="1" height="1" fill="#fff"/><rect x="9" y="6" width="6" height="1" fill="#000"/><rect x="0" y="7" width="2" height="1" fill="#000"/><rect x="2" y="7" width="1" height="1" fill="#fff"/><rect x="3" y="7" width="2" height="1" fill="#000"/><rect x="5" y="7" width="1" height="1" fill="#fff"/><rect x="6" y="7" width="2" height="1" fill="#000"/><rect x="8" y="7" width="1" height="1" fill="#fff"/><rect x="9" y="7" width="6" height="1" fill="#000"/><rect x="0" y="8" width="2" height="1" fill="#000"/><rect x="2" y="8" width="1" height="1" fill="#fff"/><rect x="3" y="8" width="5" height="1" fill="#000"/><rect x="8" y="8" width="1" height="1" fill="#fff"/><rect x="9" y="8" width="6" height="1" fill="#000"/><rect x="0" y="9" width="7" height="1" fill="#000"/><rect x="8" y="9" width="7" height="1" fill="#000"/><rect x="0" y="10" width="1" height="1" fill="#000"/><rect x="1" y="10" width="1" height="1" fill="#fff"/><rect x="2" y="10" width="3" height="1" fill="#000"/><rect x="10" y="10" width="1" height="1" fill="#000"/><rect x="11" y="10" width="1" height="1" fill="#fff"/><rect x="12" y="10" width="3" height="1" fill="#000"/><rect x="0" y="11" width="1" height="1" fill="#000"/><rect x="1" y="11" width="1" height="1" fill="#fff"/><rect x="2" y="11" width="3" height="1" fill="#000"/><rect x="10" y="11" width="1" height="1" fill="#000"/><rect x="11" y="11" width="1" height="1" fill="#fff"/><rect x="12" y="11" width="3" height="1" fill="#000"/><rect x="0" y="12" width="5" height="1" fill="#000"/><rect x="10" y="12" width="5" height="1" fill="#000"/></svg>
<svg class="a" style="left:286px;top:50px" width="15" height="14" shape-rendering="crispEdges"><rect x="5" y="0" width="4" height="1" fill="#0000ff"/><rect x="4" y="1" width="2" height="1" fill="#0000ff"/><rect x="8" y="1" width="2" height="1" fill="#0000ff"/><rect x="4" y="2" width="2" height="1" fill="#0000ff"/><rect x="4" y="3" width="1" height="1" fill="#0000ff"/><rect x="1" y="4" width="8" height="1" fill="#0000ff"/><rect x="3" y="5" width="2" height="1" fill="#0000ff"/><rect x="3" y="6" width="2" height="1" fill="#0000ff"/><rect x="3" y="7" width="1" height="1" fill="#0000ff"/><rect x="3" y="8" width="1" height="1" fill="#0000ff"/><rect x="2" y="9" width="2" height="1" fill="#0000ff"/><rect x="0" y="10" width="1" height="1" fill="#0000ff"/><rect x="2" y="10" width="1" height="1" fill="#0000ff"/><rect x="9" y="10" width="5" height="1" fill="#000"/><rect x="0" y="11" width="3" height="1" fill="#0000ff"/><rect x="10" y="11" width="3" height="1" fill="#000"/><rect x="11" y="12" width="1" height="1" fill="#000"/></svg>
<svg class="a" style="left:326px;top:48px" width="14" height="16" shape-rendering="crispEdges"><rect x="2" y="0" width="8" height="1" fill="#000"/><rect x="2" y="1" width="1" height="1" fill="#000"/><rect x="3" y="1" width="7" height="1" fill="#fff"/><rect x="10" y="1" width="2" height="1" fill="#000"/><rect x="2" y="2" width="1" height="1" fill="#000"/><rect x="3" y="2" width="7" height="1" fill="#fff"/><rect x="10" y="2" width="1" height="1" fill="#000"/><rect x="11" y="2" width="1" height="1" fill="#fff"/><rect x="12" y="2" width="1" height="1" fill="#000"/><rect x="2" y="3" width="1" height="1" fill="#000"/><rect x="3" y="3" width="7" height="1" fill="#fff"/><rect x="10" y="3" width="3" height="1" fill="#000"/><rect x="2" y="4" width="1" height="1" fill="#000"/><rect x="3" y="4" width="9" height="1" fill="#fff"/><rect x="12" y="4" width="1" height="1" fill="#000"/><rect x="2" y="5" width="1" height="1" fill="#000"/><rect x="3" y="5" width="2" height="1" fill="#fff"/><rect x="5" y="5" width="5" height="1" fill="#008080"/><rect x="10" y="5" width="2" height="1" fill="#fff"/><rect x="12" y="5" width="1" height="1" fill="#000"/><rect x="1" y="6" width="3" height="1" fill="#000"/><rect x="4" y="6" width="8" height="1" fill="#fff"/><rect x="12" y="6" width="1" height="1" fill="#000"/><rect x="0" y="7" width="1" height="1" fill="#000"/><rect x="1" y="7" width="3" height="1" fill="#ff0000"/><rect x="4" y="7" width="1" height="1" fill="#000"/><rect x="5" y="7" width="7" height="1" fill="#fff"/><rect x="12" y="7" width="1" height="1" fill="#000"/><rect x="0" y="8" width="1" height="1" fill="#000"/><rect x="1" y="8" width="3" height="1" fill="#ff0000"/><rect x="4" y="8" width="1" height="1" fill="#000"/><rect x="5" y="8" width="1" height="1" fill="#fff"/><rect x="6" y="8" width="4" height="1" fill="#008080"/><rect x="10" y="8" width="2" height="1" fill="#fff"/><rect x="12" y="8" width="1" height="1" fill="#000"/><rect x="0" y="9" width="1" height="1" fill="#000"/><rect x="1" y="9" width="3" height="1" fill="#ff0000"/><rect x="4" y="9" width="1" height="1" fill="#000"/><rect x="5" y="9" width="7" height="1" fill="#fff"/><rect x="12" y="9" width="1" height="1" fill="#000"/><rect x="1" y="10" width="3" height="1" fill="#000"/><rect x="4" y="10" width="8" height="1" fill="#fff"/><rect x="12" y="10" width="1" height="1" fill="#000"/><rect x="2" y="11" width="1" height="1" fill="#000"/><rect x="3" y="11" width="2" height="1" fill="#fff"/><rect x="5" y="11" width="5" height="1" fill="#008080"/><rect x="10" y="11" width="2" height="1" fill="#fff"/><rect x="12" y="11" width="1" height="1" fill="#000"/><rect x="2" y="12" width="1" height="1" fill="#000"/><rect x="3" y="12" width="9" height="1" fill="#fff"/><rect x="12" y="12" width="1" height="1" fill="#000"/><rect x="2" y="13" width="1" height="1" fill="#000"/><rect x="3" y="13" width="9" height="1" fill="#fff"/><rect x="12" y="13" width="1" height="1" fill="#000"/><rect x="2" y="14" width="11" height="1" fill="#000"/></svg>
<svg class="a" style="left:348px;top:48px" width="16" height="16" shape-rendering="crispEdges"><rect x="4" y="0" width="8" height="1" fill="#000"/><rect x="4" y="1" width="1" height="1" fill="#000"/><rect x="5" y="1" width="7" height="1" fill="#fff"/><rect x="12" y="1" width="2" height="1" fill="#000"/><rect x="4" y="2" width="1" height="1" fill="#000"/><rect x="5" y="2" width="7" height="1" fill="#fff"/><rect x="12" y="2" width="1" height="1" fill="#000"/><rect x="13" y="2" width="1" height="1" fill="#fff"/><rect x="14" y="2" width="1" height="1" fill="#000"/><rect x="4" y="3" width="1" height="1" fill="#000"/><rect x="5" y="3" width="7" height="1" fill="#fff"/><rect x="12" y="3" width="3" height="1" fill="#000"/><rect x="0" y="4" width="2" height="1" fill="#ff0000"/><rect x="4" y="4" width="1" height="1" fill="#000"/><rect x="5" y="4" width="3" height="1" fill="#fff"/><rect x="8" y="4" width="2" height="1" fill="#ff0000"/><rect x="10" y="4" width="4" height="1" fill="#fff"/><rect x="14" y="4" width="1" height="1" fill="#000"/><rect x="1" y="5" width="2" height="1" fill="#ff0000"/><rect x="4" y="5" width="1" height="1" fill="#000"/><rect x="5" y="5" width="2" height="1" fill="#fff"/><rect x="7" y="5" width="2" height="1" fill="#ff0000"/><rect x="9" y="5" width="1" height="1" fill="#fff"/><rect x="10" y="5" width="3" height="1" fill="#008080"/><rect x="13" y="5" width="1" height="1" fill="#fff"/><rect x="14" y="5" width="1" height="1" fill="#000"/><rect x="2" y="6" width="2" height="1" fill="#ff0000"/><rect x="4" y="6" width="1" height="1" fill="#000"/><rect x="5" y="6" width="1" height="1" fill="#fff"/><rect x="6" y="6" width="2" height="1" fill="#ff0000"/><rect x="8" y="6" width="6" height="1" fill="#fff"/><rect x="14" y="6" width="1" height="1" fill="#000"/><rect x="3" y="7" width="4" height="1" fill="#ff0000"/><rect x="7" y="7" width="7" height="1" fill="#fff"/><rect x="14" y="7" width="1" height="1" fill="#000"/><rect x="4" y="8" width="2" height="1" fill="#ff0000"/><rect x="6" y="8" width="2" height="1" fill="#fff"/><rect x="8" y="8" width="5" height="1" fill="#008080"/><rect x="13" y="8" width="1" height="1" fill="#fff"/><rect x="14" y="8" width="1" height="1" fill="#000"/><rect x="3" y="9" width="4" height="1" fill="#ff0000"/><rect x="7" y="9" width="7" height="1" fill="#fff"/><rect x="14" y="9" width="1" height="1" fill="#000"/><rect x="2" y="10" width="2" height="1" fill="#ff0000"/><rect x="4" y="10" width="1" height="1" fill="#000"/><rect x="5" y="10" width="1" height="1" fill="#fff"/><rect x="6" y="10" width="2" height="1" fill="#ff0000"/><rect x="8" y="10" width="6" height="1" fill="#fff"/><rect x="14" y="10" width="1" height="1" fill="#000"/><rect x="1" y="11" width="2" height="1" fill="#ff0000"/><rect x="4" y="11" width="1" height="1" fill="#000"/><rect x="5" y="11" width="2" height="1" fill="#fff"/><rect x="7" y="11" width="2" height="1" fill="#ff0000"/><rect x="9" y="11" width="1" height="1" fill="#fff"/><rect x="10" y="11" width="3" height="1" fill="#008080"/><rect x="13" y="11" width="1" height="1" fill="#fff"/><rect x="14" y="11" width="1" height="1" fill="#000"/><rect x="0" y="12" width="2" height="1" fill="#ff0000"/><rect x="4" y="12" width="1" height="1" fill="#000"/><rect x="5" y="12" width="3" height="1" fill="#fff"/><rect x="8" y="12" width="2" height="1" fill="#ff0000"/><rect x="10" y="12" width="4" height="1" fill="#fff"/><rect x="14" y="12" width="1" height="1" fill="#000"/><rect x="0" y="13" width="1" height="1" fill="#ff0000"/><rect x="4" y="13" width="1" height="1" fill="#000"/><rect x="5" y="13" width="4" height="1" fill="#fff"/><rect x="9" y="13" width="1" height="1" fill="#ff0000"/><rect x="10" y="13" width="4" height="1" fill="#fff"/><rect x="14" y="13" width="1" height="1" fill="#000"/><rect x="4" y="14" width="11" height="1" fill="#000"/></svg>
<svg class="a" style="left:382px;top:48px" width="17" height="16" shape-rendering="crispEdges"><rect x="6" y="1" width="8" height="1" fill="#fff"/><rect x="6" y="2" width="1" height="1" fill="#fff"/><rect x="14" y="2" width="2" height="1" fill="#fff"/><rect x="6" y="3" width="1" height="1" fill="#fff"/><rect x="14" y="3" width="1" height="1" fill="#fff"/><rect x="16" y="3" width="1" height="1" fill="#fff"/><rect x="6" y="4" width="1" height="1" fill="#fff"/><rect x="14" y="4" width="3" height="1" fill="#fff"/><rect x="2" y="5" width="5" height="1" fill="#fff"/><rect x="16" y="5" width="1" height="1" fill="#fff"/><rect x="1" y="6" width="1" height="1" fill="#fff"/><rect x="6" y="6" width="1" height="1" fill="#fff"/><rect x="9" y="6" width="5" height="1" fill="#fff"/><rect x="16" y="6" width="1" height="1" fill="#fff"/><rect x="1" y="7" width="1" height="1" fill="#fff"/><rect x="3" y="7" width="1" height="1" fill="#fff"/><rect x="6" y="7" width="1" height="1" fill="#fff"/><rect x="16" y="7" width="1" height="1" fill="#fff"/><rect x="1" y="8" width="1" height="1" fill="#fff"/><rect x="3" y="8" width="2" height="1" fill="#fff"/><rect x="6" y="8" width="1" height="1" fill="#fff"/><rect x="16" y="8" width="1" height="1" fill="#fff"/><rect x="2" y="9" width="5" height="1" fill="#fff"/><rect x="10" y="9" width="4" height="1" fill="#fff"/><rect x="16" y="9" width="1" height="1" fill="#fff"/><rect x="3" y="10" width="2" height="1" fill="#fff"/><rect x="6" y="10" width="1" height="1" fill="#fff"/><rect x="16" y="10" width="1" height="1" fill="#fff"/><rect x="3" y="11" width="1" height="1" fill="#fff"/><rect x="6" y="11" width="1" height="1" fill="#fff"/><rect x="16" y="11" width="1" height="1" fill="#fff"/><rect x="6" y="12" width="1" height="1" fill="#fff"/><rect x="9" y="12" width="5" height="1" fill="#fff"/><rect x="16" y="12" width="1" height="1" fill="#fff"/><rect x="6" y="13" width="1" height="1" fill="#fff"/><rect x="16" y="13" width="1" height="1" fill="#fff"/><rect x="6" y="14" width="1" height="1" fill="#fff"/><rect x="16" y="14" width="1" height="1" fill="#fff"/><rect x="6" y="15" width="11" height="1" fill="#fff"/><rect x="5" y="0" width="8" height="1" fill="#808080"/><rect x="5" y="1" width="1" height="1" fill="#808080"/><rect x="13" y="1" width="2" height="1" fill="#808080"/><rect x="5" y="2" width="1" height="1" fill="#808080"/><rect x="13" y="2" width="1" height="1" fill="#808080"/><rect x="15" y="2" width="1" height="1" fill="#808080"/><rect x="5" y="3" width="1" height="1" fill="#808080"/><rect x="13" y="3" width="3" height="1" fill="#808080"/><rect x="1" y="4" width="5" height="1" fill="#808080"/><rect x="15" y="4" width="1" height="1" fill="#808080"/><rect x="0" y="5" width="1" height="1" fill="#808080"/><rect x="5" y="5" width="1" height="1" fill="#808080"/><rect x="8" y="5" width="5" height="1" fill="#808080"/><rect x="15" y="5" width="1" height="1" fill="#808080"/><rect x="0" y="6" width="1" height="1" fill="#808080"/><rect x="2" y="6" width="1" height="1" fill="#808080"/><rect x="5" y="6" width="1" height="1" fill="#808080"/><rect x="15" y="6" width="1" height="1" fill="#808080"/><rect x="0" y="7" width="1" height="1" fill="#808080"/><rect x="2" y="7" width="2" height="1" fill="#808080"/><rect x="5" y="7" width="1" height="1" fill="#808080"/><rect x="15" y="7" width="1" height="1" fill="#808080"/><rect x="1" y="8" width="5" height="1" fill="#808080"/><rect x="9" y="8" width="4" height="1" fill="#808080"/><rect x="15" y="8" width="1" height="1" fill="#808080"/><rect x="2" y="9" width="2" height="1" fill="#808080"/><rect x="5" y="9" width="1" height="1" fill="#808080"/><rect x="15" y="9" width="1" height="1" fill="#808080"/><rect x="2" y="10" width="1" height="1" fill="#808080"/><rect x="5" y="10" width="1" height="1" fill="#808080"/><rect x="15" y="10" width="1" height="1" fill="#808080"/><rect x="5" y="11" width="1" height="1" fill="#808080"/><rect x="8" y="11" width="5" height="1" fill="#808080"/><rect x="15" y="11" width="1" height="1" fill="#808080"/><rect x="5" y="12" width="1" height="1" fill="#808080"/><rect x="15" y="12" width="1" height="1" fill="#808080"/><rect x="5" y="13" width="1" height="1" fill="#808080"/><rect x="15" y="13" width="1" height="1" fill="#808080"/><rect x="5" y="14" width="11" height="1" fill="#808080"/></svg>
<svg class="a" style="left:406px;top:48px" width="17" height="16" shape-rendering="crispEdges"><rect x="3" y="1" width="5" height="1" fill="#fff"/><rect x="3" y="2" width="1" height="1" fill="#fff"/><rect x="8" y="2" width="2" height="1" fill="#fff"/><rect x="3" y="3" width="1" height="1" fill="#fff"/><rect x="7" y="3" width="7" height="1" fill="#fff"/><rect x="3" y="4" width="1" height="1" fill="#fff"/><rect x="7" y="4" width="1" height="1" fill="#fff"/><rect x="14" y="4" width="2" height="1" fill="#fff"/><rect x="2" y="5" width="2" height="1" fill="#fff"/><rect x="7" y="5" width="1" height="1" fill="#fff"/><rect x="14" y="5" width="1" height="1" fill="#fff"/><rect x="16" y="5" width="1" height="1" fill="#fff"/><rect x="1" y="6" width="1" height="1" fill="#fff"/><rect x="3" y="6" width="1" height="1" fill="#fff"/><rect x="7" y="6" width="1" height="1" fill="#fff"/><rect x="14" y="6" width="3" height="1" fill="#fff"/><rect x="1" y="7" width="1" height="1" fill="#fff"/><rect x="3" y="7" width="1" height="1" fill="#fff"/><rect x="7" y="7" width="1" height="1" fill="#fff"/><rect x="16" y="7" width="1" height="1" fill="#fff"/><rect x="1" y="8" width="1" height="1" fill="#fff"/><rect x="3" y="8" width="2" height="1" fill="#fff"/><rect x="7" y="8" width="1" height="1" fill="#fff"/><rect x="10" y="8" width="4" height="1" fill="#fff"/><rect x="16" y="8" width="1" height="1" fill="#fff"/><rect x="2" y="9" width="3" height="1" fill="#fff"/><rect x="7" y="9" width="1" height="1" fill="#fff"/><rect x="16" y="9" width="1" height="1" fill="#fff"/><rect x="3" y="10" width="1" height="1" fill="#fff"/><rect x="7" y="10" width="1" height="1" fill="#fff"/><rect x="11" y="10" width="3" height="1" fill="#fff"/><rect x="16" y="10" width="1" height="1" fill="#fff"/><rect x="3" y="11" width="1" height="1" fill="#fff"/><rect x="7" y="11" width="1" height="1" fill="#fff"/><rect x="16" y="11" width="1" height="1" fill="#fff"/><rect x="3" y="12" width="5" height="1" fill="#fff"/><rect x="10" y="12" width="4" height="1" fill="#fff"/><rect x="16" y="12" width="1" height="1" fill="#fff"/><rect x="7" y="13" width="1" height="1" fill="#fff"/><rect x="16" y="13" width="1" height="1" fill="#fff"/><rect x="7" y="14" width="1" height="1" fill="#fff"/><rect x="16" y="14" width="1" height="1" fill="#fff"/><rect x="7" y="15" width="10" height="1" fill="#fff"/><rect x="2" y="0" width="5" height="1" fill="#808080"/><rect x="2" y="1" width="1" height="1" fill="#808080"/><rect x="7" y="1" width="2" height="1" fill="#808080"/><rect x="2" y="2" width="1" height="1" fill="#808080"/><rect x="6" y="2" width="7" height="1" fill="#808080"/><rect x="2" y="3" width="1" height="1" fill="#808080"/><rect x="6" y="3" width="1" height="1" fill="#808080"/><rect x="13" y="3" width="2" height="1" fill="#808080"/><rect x="1" y="4" width="2" height="1" fill="#808080"/><rect x="6" y="4" width="1" height="1" fill="#808080"/><rect x="13" y="4" width="1" height="1" fill="#808080"/><rect x="15" y="4" width="1" height="1" fill="#808080"/><rect x="0" y="5" width="1" height="1" fill="#808080"/><rect x="2" y="5" width="1" height="1" fill="#808080"/><rect x="6" y="5" width="1" height="1" fill="#808080"/><rect x="13" y="5" width="3" height="1" fill="#808080"/><rect x="0" y="6" width="1" height="1" fill="#808080"/><rect x="2" y="6" width="1" height="1" fill="#808080"/><rect x="6" y="6" width="1" height="1" fill="#808080"/><rect x="15" y="6" width="1" height="1" fill="#808080"/><rect x="0" y="7" width="1" height="1" fill="#808080"/><rect x="2" y="7" width="2" height="1" fill="#808080"/><rect x="6" y="7" width="1" height="1" fill="#808080"/><rect x="9" y="7" width="4" height="1" fill="#808080"/><rect x="15" y="7" width="1" height="1" fill="#808080"/><rect x="1" y="8" width="3" height="1" fill="#808080"/><rect x="6" y="8" width="1" height="1" fill="#808080"/><rect x="15" y="8" width="1" height="1" fill="#808080"/><rect x="2" y="9" width="1" height="1" fill="#808080"/><rect x="6" y="9" width="1" height="1" fill="#808080"/><rect x="10" y="9" width="3" height="1" fill="#808080"/><rect x="15" y="9" width="1" height="1" fill="#808080"/><rect x="2" y="10" width="1" height="1" fill="#808080"/><rect x="6" y="10" width="1" height="1" fill="#808080"/><rect x="15" y="10" width="1" height="1" fill="#808080"/><rect x="2" y="11" width="5" height="1" fill="#808080"/><rect x="9" y="11" width="4" height="1" fill="#808080"/><rect x="15" y="11" width="1" height="1" fill="#808080"/><rect x="6" y="12" width="1" height="1" fill="#808080"/><rect x="15" y="12" width="1" height="1" fill="#808080"/><rect x="6" y="13" width="1" height="1" fill="#808080"/><rect x="15" y="13" width="1" height="1" fill="#808080"/><rect x="6" y="14" width="10" height="1" fill="#808080"/></svg>
<svg class="a" style="left:430px;top:48px" width="17" height="16" shape-rendering="crispEdges"><rect x="1" y="1" width="8" height="1" fill="#fff"/><rect x="14" y="1" width="1" height="1" fill="#fff"/><rect x="1" y="2" width="1" height="1" fill="#fff"/><rect x="9" y="2" width="2" height="1" fill="#fff"/><rect x="13" y="2" width="3" height="1" fill="#fff"/><rect x="1" y="3" width="1" height="1" fill="#fff"/><rect x="9" y="3" width="1" height="1" fill="#fff"/><rect x="11" y="3" width="6" height="1" fill="#fff"/><rect x="1" y="4" width="1" height="1" fill="#fff"/><rect x="9" y="4" width="3" height="1" fill="#fff"/><rect x="14" y="4" width="1" height="1" fill="#fff"/><rect x="1" y="5" width="1" height="1" fill="#fff"/><rect x="11" y="5" width="1" height="1" fill="#fff"/><rect x="14" y="5" width="1" height="1" fill="#fff"/><rect x="1" y="6" width="1" height="1" fill="#fff"/><rect x="4" y="6" width="5" height="1" fill="#fff"/><rect x="11" y="6" width="1" height="1" fill="#fff"/><rect x="14" y="6" width="1" height="1" fill="#fff"/><rect x="1" y="7" width="1" height="1" fill="#fff"/><rect x="11" y="7" width="1" height="1" fill="#fff"/><rect x="14" y="7" width="1" height="1" fill="#fff"/><rect x="1" y="8" width="1" height="1" fill="#fff"/><rect x="11" y="8" width="1" height="1" fill="#fff"/><rect x="14" y="8" width="1" height="1" fill="#fff"/><rect x="1" y="9" width="1" height="1" fill="#fff"/><rect x="5" y="9" width="4" height="1" fill="#fff"/><rect x="11" y="9" width="1" height="1" fill="#fff"/><rect x="14" y="9" width="1" height="1" fill="#fff"/><rect x="1" y="10" width="1" height="1" fill="#fff"/><rect x="11" y="10" width="4" height="1" fill="#fff"/><rect x="1" y="11" width="1" height="1" fill="#fff"/><rect x="11" y="11" width="1" height="1" fill="#fff"/><rect x="1" y="12" width="1" height="1" fill="#fff"/><rect x="4" y="12" width="5" height="1" fill="#fff"/><rect x="11" y="12" width="1" height="1" fill="#fff"/><rect x="1" y="13" width="1" height="1" fill="#fff"/><rect x="11" y="13" width="1" height="1" fill="#fff"/><rect x="1" y="14" width="1" height="1" fill="#fff"/><rect x="11" y="14" width="1" height="1" fill="#fff"/><rect x="1" y="15" width="11" height="1" fill="#fff"/><rect x="0" y="0" width="8" height="1" fill="#808080"/><rect x="13" y="0" width="1" height="1" fill="#808080"/><rect x="0" y="1" width="1" height="1" fill="#808080"/><rect x="8" y="1" width="2" height="1" fill="#808080"/><rect x="12" y="1" width="3" height="1" fill="#808080"/><rect x="0" y="2" width="1" height="1" fill="#808080"/><rect x="8" y="2" width="1" height="1" fill="#808080"/><rect x="10" y="2" width="6" height="1" fill="#808080"/><rect x="0" y="3" width="1" height="1" fill="#808080"/><rect x="8" y="3" width="3" height="1" fill="#808080"/><rect x="13" y="3" width="1" height="1" fill="#808080"/><rect x="0" y="4" width="1" height="1" fill="#808080"/><rect x="10" y="4" width="1" height="1" fill="#808080"/><rect x="13" y="4" width="1" height="1" fill="#808080"/><rect x="0" y="5" width="1" height="1" fill="#808080"/><rect x="3" y="5" width="5" height="1" fill="#808080"/><rect x="10" y="5" width="1" height="1" fill="#808080"/><rect x="13" y="5" width="1" height="1" fill="#808080"/><rect x="0" y="6" width="1" height="1" fill="#808080"/><rect x="10" y="6" width="1" height="1" fill="#808080"/><rect x="13" y="6" width="1" height="1" fill="#808080"/><rect x="0" y="7" width="1" height="1" fill="#808080"/><rect x="10" y="7" width="1" height="1" fill="#808080"/><rect x="13" y="7" width="1" height="1" fill="#808080"/><rect x="0" y="8" width="1" height="1" fill="#808080"/><rect x="4" y="8" width="4" height="1" fill="#808080"/><rect x="10" y="8" width="1" height="1" fill="#808080"/><rect x="13" y="8" width="1" height="1" fill="#808080"/><rect x="0" y="9" width="1" height="1" fill="#808080"/><rect x="10" y="9" width="4" height="1" fill="#808080"/><rect x="0" y="10" width="1" height="1" fill="#808080"/><rect x="10" y="10" width="1" height="1" fill="#808080"/><rect x="0" y="11" width="1" height="1" fill="#808080"/><rect x="3" y="11" width="5" height="1" fill="#808080"/><rect x="10" y="11" width="1" height="1" fill="#808080"/><rect x="0" y="12" width="1" height="1" fill="#808080"/><rect x="10" y="12" width="1" height="1" fill="#808080"/><rect x="0" y="13" width="1" height="1" fill="#808080"/><rect x="10" y="13" width="1" height="1" fill="#808080"/><rect x="0" y="14" width="11" height="1" fill="#808080"/></svg>
<svg class="a" style="left:454px;top:48px" width="17" height="16" shape-rendering="crispEdges"><rect x="5" y="0" width="8" height="1" fill="#000"/><rect x="2" y="1" width="1" height="1" fill="#000080"/><rect x="5" y="1" width="1" height="1" fill="#000"/><rect x="6" y="1" width="7" height="1" fill="#fff"/><rect x="13" y="1" width="2" height="1" fill="#000"/><rect x="2" y="2" width="1" height="1" fill="#000080"/><rect x="5" y="2" width="1" height="1" fill="#000"/><rect x="6" y="2" width="7" height="1" fill="#fff"/><rect x="13" y="2" width="1" height="1" fill="#000"/><rect x="14" y="2" width="1" height="1" fill="#fff"/><rect x="15" y="2" width="1" height="1" fill="#000"/><rect x="2" y="3" width="1" height="1" fill="#000080"/><rect x="5" y="3" width="1" height="1" fill="#000"/><rect x="6" y="3" width="7" height="1" fill="#fff"/><rect x="13" y="3" width="3" height="1" fill="#000"/><rect x="2" y="4" width="1" height="1" fill="#000080"/><rect x="5" y="4" width="1" height="1" fill="#000"/><rect x="6" y="4" width="9" height="1" fill="#fff"/><rect x="15" y="4" width="1" height="1" fill="#000"/><rect x="2" y="5" width="1" height="1" fill="#000080"/><rect x="5" y="5" width="1" height="1" fill="#000"/><rect x="6" y="5" width="2" height="1" fill="#fff"/><rect x="8" y="5" width="5" height="1" fill="#008080"/><rect x="13" y="5" width="2" height="1" fill="#fff"/><rect x="15" y="5" width="1" height="1" fill="#000"/><rect x="2" y="6" width="1" height="1" fill="#000080"/><rect x="5" y="6" width="1" height="1" fill="#000"/><rect x="6" y="6" width="9" height="1" fill="#fff"/><rect x="15" y="6" width="1" height="1" fill="#000"/><rect x="2" y="7" width="1" height="1" fill="#000080"/><rect x="5" y="7" width="1" height="1" fill="#000"/><rect x="6" y="7" width="9" height="1" fill="#fff"/><rect x="15" y="7" width="1" height="1" fill="#000"/><rect x="2" y="8" width="1" height="1" fill="#000080"/><rect x="5" y="8" width="1" height="1" fill="#000"/><rect x="6" y="8" width="3" height="1" fill="#fff"/><rect x="9" y="8" width="4" height="1" fill="#008080"/><rect x="13" y="8" width="2" height="1" fill="#fff"/><rect x="15" y="8" width="1" height="1" fill="#000"/><rect x="2" y="9" width="1" height="1" fill="#000080"/><rect x="5" y="9" width="1" height="1" fill="#000"/><rect x="6" y="9" width="9" height="1" fill="#fff"/><rect x="15" y="9" width="1" height="1" fill="#000"/><rect x="2" y="10" width="1" height="1" fill="#000080"/><rect x="5" y="10" width="1" height="1" fill="#000"/><rect x="6" y="10" width="9" height="1" fill="#fff"/><rect x="15" y="10" width="1" height="1" fill="#000"/><rect x="0" y="11" width="5" height="1" fill="#000080"/><rect x="5" y="11" width="1" height="1" fill="#000"/><rect x="6" y="11" width="2" height="1" fill="#fff"/><rect x="8" y="11" width="5" height="1" fill="#008080"/><rect x="13" y="11" width="2" height="1" fill="#fff"/><rect x="15" y="11" width="1" height="1" fill="#000"/><rect x="1" y="12" width="3" height="1" fill="#000080"/><rect x="5" y="12" width="1" height="1" fill="#000"/><rect x="6" y="12" width="9" height="1" fill="#fff"/><rect x="15" y="12" width="1" height="1" fill="#000"/><rect x="2" y="13" width="1" height="1" fill="#000080"/><rect x="5" y="13" width="1" height="1" fill="#000"/><rect x="6" y="13" width="9" height="1" fill="#fff"/><rect x="15" y="13" width="1" height="1" fill="#000"/><rect x="5" y="14" width="11" height="1" fill="#000"/></svg>
<svg class="a" style="left:476px;top:48px" width="19" height="16" shape-rendering="crispEdges"><rect x="8" y="1" width="8" height="1" fill="#fff"/><rect x="5" y="2" width="1" height="1" fill="#fff"/><rect x="8" y="2" width="1" height="1" fill="#fff"/><rect x="16" y="2" width="2" height="1" fill="#fff"/><rect x="5" y="3" width="1" height="1" fill="#fff"/><rect x="8" y="3" width="1" height="1" fill="#fff"/><rect x="16" y="3" width="1" height="1" fill="#fff"/><rect x="18" y="3" width="1" height="1" fill="#fff"/><rect x="3" y="4" width="6" height="1" fill="#fff"/><rect x="16" y="4" width="3" height="1" fill="#fff"/><rect x="4" y="5" width="3" height="1" fill="#fff"/><rect x="8" y="5" width="1" height="1" fill="#fff"/><rect x="18" y="5" width="1" height="1" fill="#fff"/><rect x="3" y="6" width="6" height="1" fill="#fff"/><rect x="11" y="6" width="5" height="1" fill="#fff"/><rect x="18" y="6" width="1" height="1" fill="#fff"/><rect x="5" y="7" width="1" height="1" fill="#fff"/><rect x="8" y="7" width="1" height="1" fill="#fff"/><rect x="18" y="7" width="1" height="1" fill="#fff"/><rect x="5" y="8" width="1" height="1" fill="#fff"/><rect x="8" y="8" width="1" height="1" fill="#fff"/><rect x="18" y="8" width="1" height="1" fill="#fff"/><rect x="3" y="9" width="6" height="1" fill="#fff"/><rect x="12" y="9" width="4" height="1" fill="#fff"/><rect x="18" y="9" width="1" height="1" fill="#fff"/><rect x="4" y="10" width="3" height="1" fill="#fff"/><rect x="8" y="10" width="1" height="1" fill="#fff"/><rect x="18" y="10" width="1" height="1" fill="#fff"/><rect x="3" y="11" width="6" height="1" fill="#fff"/><rect x="18" y="11" width="1" height="1" fill="#fff"/><rect x="5" y="12" width="1" height="1" fill="#fff"/><rect x="8" y="12" width="1" height="1" fill="#fff"/><rect x="11" y="12" width="5" height="1" fill="#fff"/><rect x="18" y="12" width="1" height="1" fill="#fff"/><rect x="5" y="13" width="1" height="1" fill="#fff"/><rect x="8" y="13" width="1" height="1" fill="#fff"/><rect x="18" y="13" width="1" height="1" fill="#fff"/><rect x="5" y="14" width="1" height="1" fill="#fff"/><rect x="8" y="14" width="1" height="1" fill="#fff"/><rect x="18" y="14" width="1" height="1" fill="#fff"/><rect x="8" y="15" width="11" height="1" fill="#fff"/><rect x="7" y="0" width="8" height="1" fill="#808080"/><rect x="4" y="1" width="1" height="1" fill="#808080"/><rect x="7" y="1" width="1" height="1" fill="#808080"/><rect x="15" y="1" width="2" height="1" fill="#808080"/><rect x="4" y="2" width="1" height="1" fill="#808080"/><rect x="7" y="2" width="1" height="1" fill="#808080"/><rect x="15" y="2" width="1" height="1" fill="#808080"/><rect x="17" y="2" width="1" height="1" fill="#808080"/><rect x="2" y="3" width="6" height="1" fill="#808080"/><rect x="15" y="3" width="3" height="1" fill="#808080"/><rect x="3" y="4" width="3" height="1" fill="#808080"/><rect x="7" y="4" width="1" height="1" fill="#808080"/><rect x="17" y="4" width="1" height="1" fill="#808080"/><rect x="2" y="5" width="6" height="1" fill="#808080"/><rect x="10" y="5" width="5" height="1" fill="#808080"/><rect x="17" y="5" width="1" height="1" fill="#808080"/><rect x="4" y="6" width="1" height="1" fill="#808080"/><rect x="7" y="6" width="1" height="1" fill="#808080"/><rect x="17" y="6" width="1" height="1" fill="#808080"/><rect x="4" y="7" width="1" height="1" fill="#808080"/><rect x="7" y="7" width="1" height="1" fill="#808080"/><rect x="17" y="7" width="1" height="1" fill="#808080"/><rect x="2" y="8" width="6" height="1" fill="#808080"/><rect x="11" y="8" width="4" height="1" fill="#808080"/><rect x="17" y="8" width="1" height="1" fill="#808080"/><rect x="3" y="9" width="3" height="1" fill="#808080"/><rect x="7" y="9" width="1" height="1" fill="#808080"/><rect x="17" y="9" width="1" height="1" fill="#808080"/><rect x="2" y="10" width="6" height="1" fill="#808080"/><rect x="17" y="10" width="1" height="1" fill="#808080"/><rect x="4" y="11" width="1" height="1" fill="#808080"/><rect x="7" y="11" width="1" height="1" fill="#808080"/><rect x="10" y="11" width="5" height="1" fill="#808080"/><rect x="17" y="11" width="1" height="1" fill="#808080"/><rect x="4" y="12" width="1" height="1" fill="#808080"/><rect x="7" y="12" width="1" height="1" fill="#808080"/><rect x="17" y="12" width="1" height="1" fill="#808080"/><rect x="4" y="13" width="1" height="1" fill="#808080"/><rect x="7" y="13" width="1" height="1" fill="#808080"/><rect x="17" y="13" width="1" height="1" fill="#808080"/><rect x="7" y="14" width="11" height="1" fill="#808080"/></svg>
<div class="a t" style="left:513px;top:50px;font-size:11px;letter-spacing:-0.5px;color:#000">Stack:</div>
<div class="a" style="left:544px;top:46px;width:71px;height:20px;background:#d4d0c8;box-shadow:inset 1px 1px #808080,inset -1px -1px #fff,inset 2px 2px #404040,inset -2px -2px #d4d0c8"></div>
<div class="a t" style="left:549px;top:50px;font-size:11px;color:#808080;text-shadow:1px 1px #fff">Base</div>
<div class="a" style="left:596px;top:48px;width:17px;height:16px;background:#d4d0c8;box-shadow:inset -1px -1px #404040,inset 1px 1px #d4d0c8,inset -2px -2px #808080,inset 2px 2px #fff"></div>
<svg class="a" style="left:600px;top:54px" width="8" height="5" shape-rendering="crispEdges"><rect x="0" y="0" width="7" height="1" fill="#808080"/><rect x="1" y="1" width="5" height="1" fill="#808080"/><rect x="2" y="2" width="3" height="1" fill="#808080"/><rect x="3" y="3" width="1" height="1" fill="#808080"/></svg>
<div class="a" style="left:638px;top:48px;width:16px;height:15px;background:#d4d0c8;box-shadow:inset -1px -1px #404040,inset 1px 1px #d4d0c8,inset -2px -2px #808080,inset 2px 2px #fff"></div>
<svg class="a" style="left:642px;top:51px" width="9" height="8" shape-rendering="crispEdges"><rect x="0" y="0" width="2" height="1" fill="#000"/><rect x="6" y="0" width="2" height="1" fill="#000"/><rect x="1" y="1" width="2" height="1" fill="#000"/><rect x="5" y="1" width="2" height="1" fill="#000"/><rect x="2" y="2" width="4" height="1" fill="#000"/><rect x="3" y="3" width="2" height="1" fill="#000"/><rect x="2" y="4" width="4" height="1" fill="#000"/><rect x="1" y="5" width="2" height="1" fill="#000"/><rect x="5" y="5" width="2" height="1" fill="#000"/><rect x="0" y="6" width="2" height="1" fill="#000"/><rect x="6" y="6" width="2" height="1" fill="#000"/></svg>
<div class="a" style="left:5px;top:70px;width:649px;height:375px;background:#fff;"></div>
<div class="a" style="left:5px;top:70px;width:649px;height:1px;background:#404040;"></div>
<div class="a" style="left:5px;top:71px;width:1px;height:373px;background:#fff;"></div>
<div class="a" style="left:6px;top:71px;width:30px;height:373px;background:#d4d0c8;"></div>
<div class="a" style="left:36px;top:71px;width:1px;height:373px;background:#404040;"></div>
<div class="a" style="left:37px;top:71px;width:1px;height:373px;background:#fff;"></div>
<div class="a" style="left:38px;top:71px;width:14px;height:373px;background:#d4d0c8;"></div>
<div class="a" style="left:52px;top:71px;width:1px;height:373px;background:#404040;"></div>
<div class="a" style="left:5px;top:444px;width:633px;height:1px;background:#404040;"></div>
<div class="a" style="left:5px;top:445px;width:649px;height:1px;background:#fff;"></div>
<div class="a t" style="left:20px;top:75px;font-size:12px;width:15px;text-align:right;color:#000">1</div>
<div class="a" style="left:41px;top:78px;width:6px;height:1px;background:#000;"></div>
<div class="a t" style="left:20px;top:92px;font-size:12px;width:15px;text-align:right;color:#000">2</div>
<div class="a" style="left:41px;top:95px;width:6px;height:1px;background:#000;"></div>
<div class="a t" style="left:20px;top:109px;font-size:12px;width:15px;text-align:right;color:#000">3</div>
<div class="a" style="left:41px;top:112px;width:6px;height:1px;background:#000;"></div>
<div class="a t" style="left:20px;top:126px;font-size:12px;width:15px;text-align:right;color:#000">4</div>
<div class="a" style="left:41px;top:129px;width:6px;height:1px;background:#000;"></div>
<div class="a t" style="left:20px;top:143px;font-size:12px;width:15px;text-align:right;color:#000">5</div>
<div class="a" style="left:41px;top:146px;width:6px;height:1px;background:#000;"></div>
<div class="a t" style="left:20px;top:160px;font-size:12px;width:15px;text-align:right;color:#000">6</div>
<div class="a" style="left:41px;top:163px;width:6px;height:1px;background:#000;"></div>
<div class="a code" style="left:76px;top:73px">x=linspace(1,5);
H2 = 1/2
H3 = 1/3
H4 = 1/4
y=sin(2*pi*x) + (H2 * sin(4*pi*x))+ (H3 * sin(6*pi*x)) + (H4 * sin(8*pi*x)) ;
plot(x,y)</div>
<div class="a" style="left:638px;top:71px;width:16px;height:373px;background:#d4d0c8;"></div>
<div class="a" style="left:638px;top:71px;width:16px;height:16px;background:#d4d0c8;box-shadow:inset -1px -1px #404040,inset 1px 1px #d4d0c8,inset -2px -2px #808080,inset 2px 2px #fff"></div>
<div class="a" style="left:638px;top:87px;width:16px;height:326px;background:#d4d0c8;box-shadow:inset -1px -1px #404040,inset 1px 1px #d4d0c8,inset -2px -2px #808080,inset 2px 2px #fff"></div>
<div class="a" style="left:638px;top:413px;width:16px;height:16px;background:#d4d0c8;box-shadow:inset -1px -1px #404040,inset 1px 1px #d4d0c8,inset -2px -2px #808080,inset 2px 2px #fff"></div>
<svg class="a" style="left:642px;top:76px" width="8" height="5" shape-rendering="crispEdges"><rect x="4" y="1" width="1" height="1" fill="#fff"/><rect x="3" y="2" width="3" height="1" fill="#fff"/><rect x="2" y="3" width="5" height="1" fill="#fff"/><rect x="1" y="4" width="7" height="1" fill="#fff"/><rect x="3" y="0" width="1" height="1" fill="#808080"/><rect x="2" y="1" width="3" height="1" fill="#808080"/><rect x="1" y="2" width="5" height="1" fill="#808080"/><rect x="0" y="3" width="7" height="1" fill="#808080"/></svg>
<svg class="a" style="left:642px;top:418px" width="8" height="5" shape-rendering="crispEdges"><rect x="1" y="1" width="7" height="1" fill="#fff"/><rect x="2" y="2" width="5" height="1" fill="#fff"/><rect x="3" y="3" width="3" height="1" fill="#fff"/><rect x="4" y="4" width="1" height="1" fill="#fff"/><rect x="0" y="0" width="7" height="1" fill="#808080"/><rect x="1" y="1" width="5" height="1" fill="#808080"/><rect x="2" y="2" width="3" height="1" fill="#808080"/><rect x="3" y="3" width="1" height="1" fill="#808080"/></svg>
<div class="a" style="left:53px;top:429px;width:16px;height:15px;background:#d4d0c8;box-shadow:inset -1px -1px #404040,inset 1px 1px #d4d0c8,inset -2px -2px #808080,inset 2px 2px #fff"></div>
<svg class="a" style="left:58px;top:432px" width="5" height="8" shape-rendering="crispEdges"><rect x="4" y="1" width="1" height="1" fill="#fff"/><rect x="3" y="2" width="2" height="1" fill="#fff"/><rect x="2" y="3" width="3" height="1" fill="#fff"/><rect x="1" y="4" width="4" height="1" fill="#fff"/><rect x="2" y="5" width="3" height="1" fill="#fff"/><rect x="3" y="6" width="2" height="1" fill="#fff"/><rect x="4" y="7" width="1" height="1" fill="#fff"/><rect x="3" y="0" width="1" height="1" fill="#808080"/><rect x="2" y="1" width="2" height="1" fill="#808080"/><rect x="1" y="2" width="3" height="1" fill="#808080"/><rect x="0" y="3" width="4" height="1" fill="#808080"/><rect x="1" y="4" width="3" height="1" fill="#808080"/><rect x="2" y="5" width="2" height="1" fill="#808080"/><rect x="3" y="6" width="1" height="1" fill="#808080"/></svg>
<div class="a" style="left:637px;top:448px;width:16px;height:1px;background:#808080;"></div>
<div class="a" style="left:637px;top:448px;width:1px;height:17px;background:#808080;"></div>
<div class="a" style="left:653px;top:448px;width:1px;height:17px;background:#fff;"></div>
<div class="a" style="left:637px;top:464px;width:17px;height:1px;background:#fff;"></div>
<div class="a" style="left:64px;top:468px;width:7px;height:281px;background:#d4d0c8;"></div>
<div class="a" style="left:65px;top:468px;width:1px;height:280px;background:#fff;"></div>
<div class="a" style="left:64px;top:745px;width:568px;height:4px;background:#d4d0c8;"></div>
<div class="a" style="left:64px;top:748px;width:568px;height:1px;background:#404040;"></div>
<div class="a" style="left:70px;top:250px;width:568px;height:496px;background:#d4d0c8;"></div>
<div class="a" style="left:71px;top:251px;width:1px;height:494px;background:#fff;"></div>
<div class="a" style="left:71px;top:251px;width:566px;height:1px;background:#fff;"></div>
<div class="a" style="left:636px;top:251px;width:1px;height:494px;background:#808080;"></div>
<div class="a" style="left:637px;top:250px;width:1px;height:496px;background:#404040;"></div>
<div class="a" style="left:71px;top:744px;width:566px;height:1px;background:#808080;"></div>
<div class="a" style="left:70px;top:745px;width:568px;height:1px;background:#404040;"></div>
<div class="a" style="left:74px;top:254px;width:560px;height:18px;background:linear-gradient(to right,#0a246a,#a6caf0);"></div>
<div class="a t" style="left:94px;top:258px;font-size:11.5px;font-weight:bold;letter-spacing:-0.25px;color:#fff">Figure No. 1</div>
<svg class="a" style="left:76px;top:255px" width="17" height="17" shape-rendering="crispEdges"><rect x="0" y="0" width="16" height="1" fill="#000"/><rect x="0" y="1" width="10" height="1" fill="#000"/><rect x="10" y="1" width="1" height="1" fill="#a00000"/><rect x="11" y="1" width="1" height="1" fill="#ff9000"/><rect x="12" y="1" width="4" height="1" fill="#000"/><rect x="0" y="2" width="9" height="1" fill="#000"/><rect x="9" y="2" width="1" height="1" fill="#30b0b0"/><rect x="10" y="2" width="2" height="1" fill="#ff9000"/><rect x="12" y="2" width="1" height="1" fill="#a00000"/><rect x="13" y="2" width="3" height="1" fill="#000"/><rect x="0" y="3" width="8" height="1" fill="#000"/><rect x="8" y="3" width="1" height="1" fill="#30b0b0"/><rect x="9" y="3" width="1" height="1" fill="#000"/><rect x="10" y="3" width="1" height="1" fill="#ff9000"/><rect x="11" y="3" width="1" height="1" fill="#ffff00"/><rect x="12" y="3" width="1" height="1" fill="#e01000"/><rect x="13" y="3" width="3" height="1" fill="#000"/><rect x="0" y="4" width="8" height="1" fill="#000"/><rect x="8" y="4" width="1" height="1" fill="#30b0b0"/><rect x="9" y="4" width="1" height="1" fill="#a00000"/><rect x="10" y="4" width="2" height="1" fill="#ffff00"/><rect x="12" y="4" width="1" height="1" fill="#e01000"/><rect x="13" y="4" width="3" height="1" fill="#000"/><rect x="0" y="5" width="7" height="1" fill="#000"/><rect x="7" y="5" width="1" height="1" fill="#30b0b0"/><rect x="8" y="5" width="1" height="1" fill="#000"/><rect x="9" y="5" width="1" height="1" fill="#e01000"/><rect x="10" y="5" width="2" height="1" fill="#ffff00"/><rect x="12" y="5" width="2" height="1" fill="#e01000"/><rect x="14" y="5" width="2" height="1" fill="#000"/><rect x="0" y="6" width="6" height="1" fill="#000"/><rect x="6" y="6" width="1" height="1" fill="#30b0b0"/><rect x="7" y="6" width="1" height="1" fill="#000"/><rect x="8" y="6" width="1" height="1" fill="#a00000"/><rect x="9" y="6" width="1" height="1" fill="#e01000"/><rect x="10" y="6" width="2" height="1" fill="#ffff00"/><rect x="12" y="6" width="2" height="1" fill="#e01000"/><rect x="14" y="6" width="2" height="1" fill="#000"/><rect x="0" y="7" width="3" height="1" fill="#000"/><rect x="3" y="7" width="2" height="1" fill="#a0a8a8"/><rect x="5" y="7" width="1" height="1" fill="#30b0b0"/><rect x="6" y="7" width="1" height="1" fill="#000"/><rect x="7" y="7" width="1" height="1" fill="#a00000"/><rect x="8" y="7" width="2" height="1" fill="#e01000"/><rect x="10" y="7" width="2" height="1" fill="#ffff00"/><rect x="12" y="7" width="1" height="1" fill="#ff9000"/><rect x="13" y="7" width="1" height="1" fill="#e01000"/><rect x="14" y="7" width="2" height="1" fill="#000"/><rect x="0" y="8" width="2" height="1" fill="#000"/><rect x="2" y="8" width="4" height="1" fill="#a0a8a8"/><rect x="6" y="8" width="1" height="1" fill="#a00000"/><rect x="7" y="8" width="3" height="1" fill="#e01000"/><rect x="10" y="8" width="2" height="1" fill="#ffff00"/><rect x="12" y="8" width="1" height="1" fill="#ff9000"/><rect x="13" y="8" width="2" height="1" fill="#e01000"/><rect x="15" y="8" width="1" height="1" fill="#000"/><rect x="0" y="9" width="1" height="1" fill="#000"/><rect x="1" y="9" width="1" height="1" fill="#30b0b0"/><rect x="2" y="9" width="4" height="1" fill="#a0a8a8"/><rect x="6" y="9" width="4" height="1" fill="#e01000"/><rect x="10" y="9" width="1" height="1" fill="#ffff00"/><rect x="11" y="9" width="1" height="1" fill="#ff9000"/><rect x="12" y="9" width="3" height="1" fill="#e01000"/><rect x="15" y="9" width="1" height="1" fill="#000"/><rect x="0" y="10" width="2" height="1" fill="#000"/><rect x="2" y="10" width="1" height="1" fill="#30b0b0"/><rect x="3" y="10" width="2" height="1" fill="#a0a8a8"/><rect x="5" y="10" width="1" height="1" fill="#a00000"/><rect x="6" y="10" width="4" height="1" fill="#e01000"/><rect x="10" y="10" width="1" height="1" fill="#ffff00"/><rect x="11" y="10" width="1" height="1" fill="#ff9000"/><rect x="12" y="10" width="1" height="1" fill="#000"/><rect x="13" y="10" width="2" height="1" fill="#e01000"/><rect x="15" y="10" width="1" height="1" fill="#000"/><rect x="0" y="11" width="5" height="1" fill="#000"/><rect x="5" y="11" width="4" height="1" fill="#e01000"/><rect x="9" y="11" width="1" height="1" fill="#ffff00"/><rect x="10" y="11" width="1" height="1" fill="#ff9000"/><rect x="11" y="11" width="3" height="1" fill="#000"/><rect x="14" y="11" width="1" height="1" fill="#e01000"/><rect x="15" y="11" width="1" height="1" fill="#000"/><rect x="0" y="12" width="5" height="1" fill="#000"/><rect x="5" y="12" width="2" height="1" fill="#e01000"/><rect x="7" y="12" width="1" height="1" fill="#ff9000"/><rect x="8" y="12" width="2" height="1" fill="#ffff00"/><rect x="10" y="12" width="6" height="1" fill="#000"/><rect x="0" y="13" width="6" height="1" fill="#000"/><rect x="6" y="13" width="3" height="1" fill="#ffff00"/><rect x="9" y="13" width="7" height="1" fill="#000"/><rect x="0" y="14" width="6" height="1" fill="#000"/><rect x="6" y="14" width="2" height="1" fill="#ffff00"/><rect x="8" y="14" width="8" height="1" fill="#000"/><rect x="0" y="15" width="16" height="1" fill="#000"/></svg>
<div class="a" style="left:582px;top:256px;width:16px;height:14px;background:#d4d0c8;box-shadow:inset -1px -1px #404040,inset 1px 1px #d4d0c8,inset -2px -2px #808080,inset 2px 2px #fff"></div>
<div class="a" style="left:598px;top:256px;width:16px;height:14px;background:#d4d0c8;box-shadow:inset -1px -1px #404040,inset 1px 1px #d4d0c8,inset -2px -2px #808080,inset 2px 2px #fff"></div>
<div class="a" style="left:616px;top:256px;width:16px;height:14px;background:#d4d0c8;box-shadow:inset -1px -1px #404040,inset 1px 1px #d4d0c8,inset -2px -2px #808080,inset 2px 2px #fff"></div>
<div class="a" style="left:586px;top:265px;width:6px;height:2px;background:#000;"></div>
<div class="a" style="left:601px;top:258px;width:9px;height:9px;border:1px solid #000;border-top-width:2px"></div>
<svg class="a" style="left:620px;top:259px" width="9" height="8" shape-rendering="crispEdges"><rect x="0" y="0" width="2" height="1" fill="#000"/><rect x="6" y="0" width="2" height="1" fill="#000"/><rect x="1" y="1" width="2" height="1" fill="#000"/><rect x="5" y="1" width="2" height="1" fill="#000"/><rect x="2" y="2" width="4" height="1" fill="#000"/><rect x="3" y="3" width="2" height="1" fill="#000"/><rect x="2" y="4" width="4" height="1" fill="#000"/><rect x="1" y="5" width="2" height="1" fill="#000"/><rect x="5" y="5" width="2" height="1" fill="#000"/><rect x="0" y="6" width="2" height="1" fill="#000"/><rect x="6" y="6" width="2" height="1" fill="#000"/></svg>
<div class="a t" style="left:79px;top:277px;font-size:11px;color:#000">File</div>
<div class="a t" style="left:107px;top:277px;font-size:11px;color:#000">Edit</div>
<div class="a t" style="left:136px;top:277px;font-size:11px;color:#000">View</div>
<div class="a t" style="left:171px;top:277px;font-size:11px;color:#000">Insert</div>
<div class="a t" style="left:212px;top:277px;font-size:11px;color:#000">Tools</div>
<div class="a t" style="left:249px;top:277px;font-size:11px;color:#000">Window</div>
<div class="a t" style="left:299px;top:277px;font-size:11px;color:#000">Help</div>
<div class="a" style="left:74px;top:292px;width:560px;height:1px;background:#808080;"></div>
<div class="a" style="left:74px;top:293px;width:560px;height:1px;background:#fff;"></div>
<div class="a" style="left:78px;top:296px;width:2px;height:22px;background:#fff;"></div>
<div class="a" style="left:80px;top:296px;width:1px;height:22px;background:#808080;"></div>
<div class="a" style="left:78px;top:317px;width:3px;height:1px;background:#808080;"></div>
<div class="a" style="left:81px;top:296px;width:2px;height:22px;background:#fff;"></div>
<div class="a" style="left:83px;top:296px;width:1px;height:22px;background:#808080;"></div>
<div class="a" style="left:81px;top:317px;width:3px;height:1px;background:#808080;"></div>
<svg class="a" style="left:90px;top:301px" width="12" height="14" shape-rendering="crispEdges"><rect x="0" y="0" width="8" height="1" fill="#000"/><rect x="0" y="1" width="1" height="1" fill="#000"/><rect x="1" y="1" width="7" height="1" fill="#fff"/><rect x="8" y="1" width="2" height="1" fill="#000"/><rect x="0" y="2" width="1" height="1" fill="#000"/><rect x="1" y="2" width="7" height="1" fill="#fff"/><rect x="8" y="2" width="1" height="1" fill="#000"/><rect x="9" y="2" width="1" height="1" fill="#fff"/><rect x="10" y="2" width="1" height="1" fill="#000"/><rect x="0" y="3" width="1" height="1" fill="#000"/><rect x="1" y="3" width="7" height="1" fill="#fff"/><rect x="8" y="3" width="3" height="1" fill="#000"/><rect x="0" y="4" width="1" height="1" fill="#000"/><rect x="1" y="4" width="9" height="1" fill="#fff"/><rect x="10" y="4" width="1" height="1" fill="#000"/><rect x="0" y="5" width="1" height="1" fill="#000"/><rect x="1" y="5" width="9" height="1" fill="#fff"/><rect x="10" y="5" width="1" height="1" fill="#000"/><rect x="0" y="6" width="1" height="1" fill="#000"/><rect x="1" y="6" width="9" height="1" fill="#fff"/><rect x="10" y="6" width="1" height="1" fill="#000"/><rect x="0" y="7" width="1" height="1" fill="#000"/><rect x="1" y="7" width="9" height="1" fill="#fff"/><rect x="10" y="7" width="1" height="1" fill="#000"/><rect x="0" y="8" width="1" height="1" fill="#000"/><rect x="1" y="8" width="9" height="1" fill="#fff"/><rect x="10" y="8" width="1" height="1" fill="#000"/><rect x="0" y="9" width="1" height="1" fill="#000"/><rect x="1" y="9" width="9" height="1" fill="#fff"/><rect x="10" y="9" width="1" height="1" fill="#000"/><rect x="0" y="10" width="1" height="1" fill="#000"/><rect x="1" y="10" width="9" height="1" fill="#fff"/><rect x="10" y="10" width="1" height="1" fill="#000"/><rect x="0" y="11" width="1" height="1" fill="#000"/><rect x="1" y="11" width="9" height="1" fill="#fff"/><rect x="10" y="11" width="1" height="1" fill="#000"/><rect x="0" y="12" width="11" height="1" fill="#000"/></svg>
<svg class="a" style="left:112px;top:300px" width="17" height="14" shape-rendering="crispEdges"><rect x="8" y="0" width="3" height="1" fill="#000"/><rect x="7" y="1" width="1" height="1" fill="#000"/><rect x="11" y="1" width="1" height="1" fill="#000"/><rect x="13" y="1" width="1" height="1" fill="#000"/><rect x="12" y="2" width="2" height="1" fill="#000"/><rect x="1" y="3" width="3" height="1" fill="#000"/><rect x="11" y="3" width="3" height="1" fill="#000"/><rect x="0" y="4" width="11" height="1" fill="#000"/><rect x="0" y="5" width="1" height="1" fill="#000"/><rect x="1" y="5" width="1" height="1" fill="#ffff00"/><rect x="2" y="5" width="1" height="1" fill="#fff"/><rect x="3" y="5" width="1" height="1" fill="#ffff00"/><rect x="4" y="5" width="1" height="1" fill="#fff"/><rect x="5" y="5" width="1" height="1" fill="#ffff00"/><rect x="6" y="5" width="1" height="1" fill="#fff"/><rect x="7" y="5" width="1" height="1" fill="#ffff00"/><rect x="8" y="5" width="1" height="1" fill="#fff"/><rect x="9" y="5" width="1" height="1" fill="#ffff00"/><rect x="10" y="5" width="1" height="1" fill="#000"/><rect x="0" y="6" width="1" height="1" fill="#000"/><rect x="1" y="6" width="1" height="1" fill="#fff"/><rect x="2" y="6" width="1" height="1" fill="#ffff00"/><rect x="3" y="6" width="1" height="1" fill="#fff"/><rect x="4" y="6" width="1" height="1" fill="#ffff00"/><rect x="5" y="6" width="1" height="1" fill="#fff"/><rect x="6" y="6" width="1" height="1" fill="#ffff00"/><rect x="7" y="6" width="1" height="1" fill="#fff"/><rect x="8" y="6" width="1" height="1" fill="#ffff00"/><rect x="9" y="6" width="1" height="1" fill="#fff"/><rect x="10" y="6" width="1" height="1" fill="#000"/><rect x="0" y="7" width="1" height="1" fill="#000"/><rect x="1" y="7" width="1" height="1" fill="#ffff00"/><rect x="2" y="7" width="1" height="1" fill="#fff"/><rect x="3" y="7" width="1" height="1" fill="#ffff00"/><rect x="4" y="7" width="1" height="1" fill="#fff"/><rect x="5" y="7" width="11" height="1" fill="#000"/><rect x="0" y="8" width="1" height="1" fill="#000"/><rect x="1" y="8" width="1" height="1" fill="#fff"/><rect x="2" y="8" width="1" height="1" fill="#ffff00"/><rect x="3" y="8" width="1" height="1" fill="#fff"/><rect x="4" y="8" width="1" height="1" fill="#000"/><rect x="5" y="8" width="9" height="1" fill="#808000"/><rect x="14" y="8" width="1" height="1" fill="#000"/><rect x="0" y="9" width="1" height="1" fill="#000"/><rect x="1" y="9" width="1" height="1" fill="#ffff00"/><rect x="2" y="9" width="1" height="1" fill="#fff"/><rect x="3" y="9" width="1" height="1" fill="#000"/><rect x="4" y="9" width="9" height="1" fill="#808000"/><rect x="13" y="9" width="1" height="1" fill="#000"/><rect x="0" y="10" width="1" height="1" fill="#000"/><rect x="1" y="10" width="1" height="1" fill="#fff"/><rect x="2" y="10" width="1" height="1" fill="#000"/><rect x="3" y="10" width="9" height="1" fill="#808000"/><rect x="12" y="10" width="1" height="1" fill="#000"/><rect x="0" y="11" width="2" height="1" fill="#000"/><rect x="2" y="11" width="9" height="1" fill="#808000"/><rect x="11" y="11" width="1" height="1" fill="#000"/><rect x="0" y="12" width="11" height="1" fill="#000"/></svg>
<svg class="a" style="left:137px;top:301px" width="15" height="15" shape-rendering="crispEdges"><rect x="0" y="0" width="14" height="1" fill="#000"/><rect x="0" y="1" width="1" height="1" fill="#000"/><rect x="1" y="1" width="1" height="1" fill="#808000"/><rect x="2" y="1" width="1" height="1" fill="#000"/><rect x="3" y="1" width="8" height="1" fill="#fff"/><rect x="11" y="1" width="1" height="1" fill="#000"/><rect x="12" y="1" width="1" height="1" fill="#fff"/><rect x="13" y="1" width="1" height="1" fill="#000"/><rect x="0" y="2" width="1" height="1" fill="#000"/><rect x="1" y="2" width="1" height="1" fill="#808000"/><rect x="2" y="2" width="1" height="1" fill="#000"/><rect x="3" y="2" width="1" height="1" fill="#fff"/><rect x="4" y="2" width="6" height="1" fill="#d8d8d8"/><rect x="10" y="2" width="1" height="1" fill="#fff"/><rect x="11" y="2" width="1" height="1" fill="#000"/><rect x="12" y="2" width="1" height="1" fill="#808000"/><rect x="13" y="2" width="1" height="1" fill="#000"/><rect x="0" y="3" width="1" height="1" fill="#000"/><rect x="1" y="3" width="1" height="1" fill="#808000"/><rect x="2" y="3" width="1" height="1" fill="#000"/><rect x="3" y="3" width="1" height="1" fill="#fff"/><rect x="4" y="3" width="6" height="1" fill="#d8d8d8"/><rect x="10" y="3" width="1" height="1" fill="#fff"/><rect x="11" y="3" width="1" height="1" fill="#000"/><rect x="12" y="3" width="1" height="1" fill="#808000"/><rect x="13" y="3" width="1" height="1" fill="#000"/><rect x="0" y="4" width="1" height="1" fill="#000"/><rect x="1" y="4" width="1" height="1" fill="#808000"/><rect x="2" y="4" width="1" height="1" fill="#000"/><rect x="3" y="4" width="1" height="1" fill="#fff"/><rect x="4" y="4" width="6" height="1" fill="#d8d8d8"/><rect x="10" y="4" width="1" height="1" fill="#fff"/><rect x="11" y="4" width="1" height="1" fill="#000"/><rect x="12" y="4" width="1" height="1" fill="#808000"/><rect x="13" y="4" width="1" height="1" fill="#000"/><rect x="0" y="5" width="1" height="1" fill="#000"/><rect x="1" y="5" width="1" height="1" fill="#808000"/><rect x="2" y="5" width="1" height="1" fill="#000"/><rect x="3" y="5" width="8" height="1" fill="#fff"/><rect x="11" y="5" width="1" height="1" fill="#000"/><rect x="12" y="5" width="1" height="1" fill="#808000"/><rect x="13" y="5" width="1" height="1" fill="#000"/><rect x="0" y="6" width="1" height="1" fill="#000"/><rect x="1" y="6" width="1" height="1" fill="#808000"/><rect x="2" y="6" width="10" height="1" fill="#000"/><rect x="12" y="6" width="1" height="1" fill="#808000"/><rect x="13" y="6" width="1" height="1" fill="#000"/><rect x="0" y="7" width="1" height="1" fill="#000"/><rect x="1" y="7" width="12" height="1" fill="#808000"/><rect x="13" y="7" width="1" height="1" fill="#000"/><rect x="0" y="8" width="1" height="1" fill="#000"/><rect x="1" y="8" width="1" height="1" fill="#808000"/><rect x="2" y="8" width="10" height="1" fill="#000"/><rect x="12" y="8" width="1" height="1" fill="#808000"/><rect x="13" y="8" width="1" height="1" fill="#000"/><rect x="0" y="9" width="1" height="1" fill="#000"/><rect x="1" y="9" width="1" height="1" fill="#808000"/><rect x="2" y="9" width="7" height="1" fill="#000"/><rect x="9" y="9" width="2" height="1" fill="#fff"/><rect x="11" y="9" width="1" height="1" fill="#000"/><rect x="12" y="9" width="1" height="1" fill="#808000"/><rect x="13" y="9" width="1" height="1" fill="#000"/><rect x="0" y="10" width="1" height="1" fill="#000"/><rect x="1" y="10" width="1" height="1" fill="#808000"/><rect x="2" y="10" width="7" height="1" fill="#000"/><rect x="9" y="10" width="2" height="1" fill="#fff"/><rect x="11" y="10" width="1" height="1" fill="#000"/><rect x="12" y="10" width="1" height="1" fill="#808000"/><rect x="13" y="10" width="1" height="1" fill="#000"/><rect x="0" y="11" width="1" height="1" fill="#000"/><rect x="1" y="11" width="1" height="1" fill="#808000"/><rect x="2" y="11" width="7" height="1" fill="#000"/><rect x="9" y="11" width="2" height="1" fill="#fff"/><rect x="11" y="11" width="1" height="1" fill="#000"/><rect x="12" y="11" width="1" height="1" fill="#808000"/><rect x="13" y="11" width="1" height="1" fill="#000"/><rect x="0" y="12" width="1" height="1" fill="#000"/><rect x="1" y="12" width="1" height="1" fill="#808000"/><rect x="2" y="12" width="10" height="1" fill="#000"/><rect x="12" y="12" width="1" height="1" fill="#808000"/><rect x="13" y="12" width="1" height="1" fill="#000"/><rect x="1" y="13" width="13" height="1" fill="#000"/></svg>
<svg class="a" style="left:160px;top:300px" width="17" height="15" shape-rendering="crispEdges"><rect x="6" y="0" width="8" height="1" fill="#000"/><rect x="5" y="1" width="1" height="1" fill="#000"/><rect x="6" y="1" width="6" height="1" fill="#fff"/><rect x="12" y="1" width="2" height="1" fill="#000"/><rect x="4" y="2" width="1" height="1" fill="#000"/><rect x="5" y="2" width="1" height="1" fill="#fff"/><rect x="6" y="2" width="5" height="1" fill="#000"/><rect x="11" y="2" width="1" height="1" fill="#fff"/><rect x="12" y="2" width="1" height="1" fill="#000"/><rect x="4" y="3" width="1" height="1" fill="#000"/><rect x="5" y="3" width="6" height="1" fill="#fff"/><rect x="11" y="3" width="2" height="1" fill="#000"/><rect x="3" y="4" width="1" height="1" fill="#000"/><rect x="4" y="4" width="1" height="1" fill="#fff"/><rect x="5" y="4" width="5" height="1" fill="#000"/><rect x="10" y="4" width="1" height="1" fill="#fff"/><rect x="11" y="4" width="1" height="1" fill="#000"/><rect x="13" y="4" width="2" height="1" fill="#000"/><rect x="2" y="5" width="1" height="1" fill="#000"/><rect x="3" y="5" width="8" height="1" fill="#fff"/><rect x="11" y="5" width="1" height="1" fill="#000"/><rect x="12" y="5" width="1" height="1" fill="#fff"/><rect x="13" y="5" width="1" height="1" fill="#000"/><rect x="14" y="5" width="1" height="1" fill="#fff"/><rect x="15" y="5" width="1" height="1" fill="#000"/><rect x="1" y="6" width="11" height="1" fill="#000"/><rect x="12" y="6" width="1" height="1" fill="#fff"/><rect x="13" y="6" width="1" height="1" fill="#000"/><rect x="14" y="6" width="1" height="1" fill="#fff"/><rect x="15" y="6" width="1" height="1" fill="#000"/><rect x="0" y="7" width="1" height="1" fill="#000"/><rect x="1" y="7" width="10" height="1" fill="#fff"/><rect x="11" y="7" width="2" height="1" fill="#000"/><rect x="13" y="7" width="1" height="1" fill="#fff"/><rect x="14" y="7" width="1" height="1" fill="#000"/><rect x="0" y="8" width="14" height="1" fill="#000"/><rect x="14" y="8" width="1" height="1" fill="#fff"/><rect x="15" y="8" width="1" height="1" fill="#000"/><rect x="0" y="9" width="1" height="1" fill="#000"/><rect x="1" y="9" width="6" height="1" fill="#c0c0c0"/><rect x="7" y="9" width="3" height="1" fill="#ffff00"/><rect x="10" y="9" width="1" height="1" fill="#c0c0c0"/><rect x="11" y="9" width="2" height="1" fill="#000"/><rect x="13" y="9" width="1" height="1" fill="#fff"/><rect x="14" y="9" width="1" height="1" fill="#000"/><rect x="0" y="10" width="1" height="1" fill="#000"/><rect x="1" y="10" width="6" height="1" fill="#c0c0c0"/><rect x="7" y="10" width="3" height="1" fill="#ffff00"/><rect x="10" y="10" width="1" height="1" fill="#c0c0c0"/><rect x="11" y="10" width="1" height="1" fill="#000"/><rect x="13" y="10" width="2" height="1" fill="#000"/><rect x="0" y="11" width="12" height="1" fill="#000"/><rect x="12" y="11" width="1" height="1" fill="#fff"/><rect x="13" y="11" width="1" height="1" fill="#000"/><rect x="1" y="12" width="1" height="1" fill="#000"/><rect x="2" y="12" width="9" height="1" fill="#fff"/><rect x="11" y="12" width="2" height="1" fill="#000"/><rect x="2" y="13" width="10" height="1" fill="#000"/></svg>
<svg class="a" style="left:196px;top:300px" width="9" height="15" shape-rendering="crispEdges"><rect x="0" y="0" width="1" height="1" fill="#000"/><rect x="0" y="1" width="2" height="1" fill="#000"/><rect x="0" y="2" width="3" height="1" fill="#000"/><rect x="0" y="3" width="4" height="1" fill="#000"/><rect x="0" y="4" width="5" height="1" fill="#000"/><rect x="0" y="5" width="6" height="1" fill="#000"/><rect x="0" y="6" width="7" height="1" fill="#000"/><rect x="0" y="7" width="8" height="1" fill="#000"/><rect x="0" y="8" width="5" height="1" fill="#000"/><rect x="0" y="9" width="2" height="1" fill="#000"/><rect x="3" y="9" width="2" height="1" fill="#000"/><rect x="0" y="10" width="1" height="1" fill="#000"/><rect x="4" y="10" width="2" height="1" fill="#000"/><rect x="4" y="11" width="2" height="1" fill="#000"/><rect x="5" y="12" width="2" height="1" fill="#000"/><rect x="5" y="13" width="1" height="1" fill="#000"/></svg>
<svg class="a" style="left:218px;top:301px" width="12" height="14" shape-rendering="crispEdges"><rect x="4" y="0" width="3" height="1" fill="#000"/><rect x="4" y="1" width="3" height="1" fill="#000"/><rect x="3" y="2" width="2" height="1" fill="#000"/><rect x="6" y="2" width="2" height="1" fill="#000"/><rect x="3" y="3" width="2" height="1" fill="#000"/><rect x="6" y="3" width="2" height="1" fill="#000"/><rect x="3" y="4" width="2" height="1" fill="#000"/><rect x="6" y="4" width="2" height="1" fill="#000"/><rect x="2" y="5" width="2" height="1" fill="#000"/><rect x="7" y="5" width="2" height="1" fill="#000"/><rect x="2" y="6" width="7" height="1" fill="#000"/><rect x="2" y="7" width="7" height="1" fill="#000"/><rect x="1" y="8" width="2" height="1" fill="#000"/><rect x="8" y="8" width="2" height="1" fill="#000"/><rect x="1" y="9" width="2" height="1" fill="#000"/><rect x="8" y="9" width="2" height="1" fill="#000"/><rect x="1" y="10" width="2" height="1" fill="#000"/><rect x="8" y="10" width="2" height="1" fill="#000"/><rect x="0" y="11" width="3" height="1" fill="#000"/><rect x="8" y="11" width="3" height="1" fill="#000"/><rect x="0" y="12" width="3" height="1" fill="#000"/><rect x="8" y="12" width="3" height="1" fill="#000"/></svg>
<svg class="a" style="left:242px;top:302px" width="13" height="13" shape-rendering="crispEdges"><rect x="5" y="0" width="7" height="1" fill="#000"/><rect x="5" y="1" width="7" height="1" fill="#000"/><rect x="10" y="2" width="2" height="1" fill="#000"/><rect x="9" y="3" width="3" height="1" fill="#000"/><rect x="8" y="4" width="4" height="1" fill="#000"/><rect x="7" y="5" width="2" height="1" fill="#000"/><rect x="10" y="5" width="2" height="1" fill="#000"/><rect x="6" y="6" width="2" height="1" fill="#000"/><rect x="10" y="6" width="2" height="1" fill="#000"/><rect x="5" y="7" width="2" height="1" fill="#000"/><rect x="4" y="8" width="2" height="1" fill="#000"/><rect x="3" y="9" width="2" height="1" fill="#000"/><rect x="2" y="10" width="2" height="1" fill="#000"/><rect x="1" y="11" width="2" height="1" fill="#000"/></svg>
<svg class="a" style="left:266px;top:302px" width="14" height="13" shape-rendering="crispEdges"><rect x="11" y="0" width="2" height="1" fill="#000"/><rect x="10" y="1" width="2" height="1" fill="#000"/><rect x="9" y="2" width="2" height="1" fill="#000"/><rect x="8" y="3" width="2" height="1" fill="#000"/><rect x="7" y="4" width="2" height="1" fill="#000"/><rect x="6" y="5" width="2" height="1" fill="#000"/><rect x="5" y="6" width="2" height="1" fill="#000"/><rect x="4" y="7" width="2" height="1" fill="#000"/><rect x="3" y="8" width="2" height="1" fill="#000"/><rect x="2" y="9" width="2" height="1" fill="#000"/><rect x="1" y="10" width="2" height="1" fill="#000"/><rect x="0" y="11" width="2" height="1" fill="#000"/></svg>
<svg class="a" style="left:300px;top:300px" width="13" height="13" shape-rendering="crispEdges"><rect x="4" y="0" width="4" height="1" fill="#000"/><rect x="2" y="1" width="2" height="1" fill="#000"/><rect x="8" y="1" width="2" height="1" fill="#000"/><rect x="1" y="2" width="1" height="1" fill="#000"/><rect x="10" y="2" width="1" height="1" fill="#000"/><rect x="1" y="3" width="1" height="1" fill="#000"/><rect x="5" y="3" width="2" height="1" fill="#000"/><rect x="10" y="3" width="1" height="1" fill="#000"/><rect x="0" y="4" width="1" height="1" fill="#000"/><rect x="5" y="4" width="2" height="1" fill="#000"/><rect x="11" y="4" width="1" height="1" fill="#000"/><rect x="0" y="5" width="1" height="1" fill="#000"/><rect x="3" y="5" width="6" height="1" fill="#000"/><rect x="11" y="5" width="1" height="1" fill="#000"/><rect x="0" y="6" width="1" height="1" fill="#000"/><rect x="3" y="6" width="6" height="1" fill="#000"/><rect x="11" y="6" width="1" height="1" fill="#000"/><rect x="0" y="7" width="1" height="1" fill="#000"/><rect x="5" y="7" width="2" height="1" fill="#000"/><rect x="11" y="7" width="1" height="1" fill="#000"/><rect x="1" y="8" width="1" height="1" fill="#000"/><rect x="5" y="8" width="2" height="1" fill="#000"/><rect x="10" y="8" width="1" height="1" fill="#000"/><rect x="1" y="9" width="1" height="1" fill="#000"/><rect x="10" y="9" width="1" height="1" fill="#000"/><rect x="2" y="10" width="2" height="1" fill="#000"/><rect x="8" y="10" width="2" height="1" fill="#000"/><rect x="4" y="11" width="4" height="1" fill="#000"/></svg>
<svg class="a" style="left:297px;top:309px" width="8" height="8" shape-rendering="crispEdges"><rect x="4" y="1" width="2" height="1" fill="#000"/><rect x="3" y="2" width="2" height="1" fill="#000"/><rect x="2" y="3" width="2" height="1" fill="#000"/><rect x="1" y="4" width="2" height="1" fill="#000"/><rect x="0" y="5" width="2" height="1" fill="#000"/></svg>
<svg class="a" style="left:324px;top:300px" width="13" height="13" shape-rendering="crispEdges"><rect x="4" y="0" width="4" height="1" fill="#000"/><rect x="2" y="1" width="2" height="1" fill="#000"/><rect x="8" y="1" width="2" height="1" fill="#000"/><rect x="1" y="2" width="1" height="1" fill="#000"/><rect x="10" y="2" width="1" height="1" fill="#000"/><rect x="1" y="3" width="1" height="1" fill="#000"/><rect x="10" y="3" width="1" height="1" fill="#000"/><rect x="0" y="4" width="1" height="1" fill="#000"/><rect x="11" y="4" width="1" height="1" fill="#000"/><rect x="0" y="5" width="1" height="1" fill="#000"/><rect x="3" y="5" width="6" height="1" fill="#000"/><rect x="11" y="5" width="1" height="1" fill="#000"/><rect x="0" y="6" width="1" height="1" fill="#000"/><rect x="3" y="6" width="6" height="1" fill="#000"/><rect x="11" y="6" width="1" height="1" fill="#000"/><rect x="0" y="7" width="1" height="1" fill="#000"/><rect x="11" y="7" width="1" height="1" fill="#000"/><rect x="1" y="8" width="1" height="1" fill="#000"/><rect x="10" y="8" width="1" height="1" fill="#000"/><rect x="1" y="9" width="1" height="1" fill="#000"/><rect x="10" y="9" width="1" height="1" fill="#000"/><rect x="2" y="10" width="2" height="1" fill="#000"/><rect x="8" y="10" width="2" height="1" fill="#000"/><rect x="4" y="11" width="4" height="1" fill="#000"/></svg>
<svg class="a" style="left:321px;top:309px" width="8" height="8" shape-rendering="crispEdges"><rect x="4" y="1" width="2" height="1" fill="#000"/><rect x="3" y="2" width="2" height="1" fill="#000"/><rect x="2" y="3" width="2" height="1" fill="#000"/><rect x="1" y="4" width="2" height="1" fill="#000"/><rect x="0" y="5" width="2" height="1" fill="#000"/></svg>
<svg class="a" style="left:346px;top:301px" width="14" height="14" shape-rendering="crispEdges"><rect x="3" y="0" width="1" height="1" fill="#000"/><rect x="5" y="0" width="4" height="1" fill="#000"/><rect x="2" y="1" width="3" height="1" fill="#000"/><rect x="9" y="1" width="2" height="1" fill="#000"/><rect x="1" y="2" width="5" height="1" fill="#000"/><rect x="11" y="2" width="1" height="1" fill="#000"/><rect x="11" y="3" width="1" height="1" fill="#000"/><rect x="12" y="5" width="1" height="1" fill="#000"/><rect x="0" y="6" width="1" height="1" fill="#000"/><rect x="12" y="7" width="1" height="1" fill="#000"/><rect x="1" y="9" width="1" height="1" fill="#000"/><rect x="11" y="9" width="1" height="1" fill="#000"/><rect x="3" y="11" width="1" height="1" fill="#000"/><rect x="9" y="11" width="1" height="1" fill="#000"/><rect x="6" y="12" width="1" height="1" fill="#000"/></svg>
<div class="a" style="left:183px;top:297px;width:1px;height:21px;background:#808080;"></div>
<div class="a" style="left:184px;top:297px;width:1px;height:21px;background:#fff;"></div>
<div class="a" style="left:287px;top:297px;width:1px;height:21px;background:#808080;"></div>
<div class="a" style="left:288px;top:297px;width:1px;height:21px;background:#fff;"></div>
<div class="a" style="left:72px;top:322px;width:564px;height:422px;background:#cdcdcd;"></div>
<svg class="a" style="left:0;top:0" width="658" height="755"><rect x="147.5" y="354.5" width="434" height="342" fill="#fff" stroke="#000"/><path d="M201.5 696V691M201.5 355V360M255.5 696V691M255.5 355V360M309.5 696V691M309.5 355V360M364.5 696V691M364.5 355V360M418.5 696V691M418.5 355V360M472.5 696V691M472.5 355V360M526.5 696V691M526.5 355V360M148 396.5H153M581 396.5H576M148 439.5H153M581 439.5H576M148 482.5H153M581 482.5H576M148 525.5H153M581 525.5H576M148 567.5H153M581 567.5H576M148 610.5H153M581 610.5H576M148 653.5H153M581 653.5H576" stroke="#000" fill="none"/><polyline fill="none" stroke="#0000ff" stroke-width="1" shape-rendering="crispEdges" points="147.50,525.50 151.88,445.41 156.27,399.98 160.65,400.23 165.04,428.85 169.42,457.20 173.80,468.29 178.19,466.47 182.57,467.70 186.95,481.77 191.34,503.51 195.72,520.10 200.11,525.38 204.49,526.06 208.87,534.00 213.26,552.94 217.64,573.91 222.03,584.67 226.41,583.72 230.79,583.77 235.18,599.57 239.56,630.36 243.94,654.55 248.33,644.05 252.71,587.73 257.10,503.90 261.48,429.85 265.86,396.02 270.25,405.84 274.63,436.97 279.02,461.77 283.40,468.48 287.78,465.88 292.17,469.97 296.55,486.96 300.93,508.59 305.32,522.43 309.70,525.50 314.09,526.99 318.47,537.87 322.85,558.53 327.24,577.88 331.62,585.24 336.01,582.95 340.39,585.90 344.77,606.40 349.16,638.19 353.54,656.07 357.92,634.05 362.31,568.05 366.69,482.95 371.08,416.95 375.46,394.93 379.84,412.81 384.23,444.60 388.61,465.10 392.99,468.05 397.38,465.76 401.76,473.12 406.15,492.47 410.53,513.13 414.91,524.01 419.30,525.50 423.68,528.57 428.07,542.41 432.45,564.04 436.83,581.03 441.22,585.12 445.60,582.52 449.98,589.23 454.37,614.03 458.75,645.16 463.14,654.98 467.52,621.15 471.90,547.10 476.29,463.27 480.67,406.95 485.06,396.45 489.44,420.64 493.82,451.43 498.21,467.23 502.59,467.28 506.97,466.33 511.36,477.09 515.74,498.06 520.13,517.00 524.51,524.94 528.89,525.62 533.28,530.90 537.66,547.49 542.05,569.23 546.43,583.30 550.81,584.53 555.20,582.71 559.58,593.80 563.96,622.15 568.35,650.77 572.73,651.02 577.12,605.59 581.50,525.50"/></svg>
<div class="a t" style="left:83px;top:348px;font-size:13px;width:60px;text-align:right;color:#000">2</div>
<div class="a t" style="left:83px;top:390px;font-size:13px;width:60px;text-align:right;color:#000">1.5</div>
<div class="a t" style="left:83px;top:433px;font-size:13px;width:60px;text-align:right;color:#000">1</div>
<div class="a t" style="left:83px;top:476px;font-size:13px;width:60px;text-align:right;color:#000">0.5</div>
<div class="a t" style="left:83px;top:519px;font-size:13px;width:60px;text-align:right;color:#000">0</div>
<div class="a t" style="left:83px;top:561px;font-size:13px;width:60px;text-align:right;color:#000">-0.5</div>
<div class="a t" style="left:83px;top:604px;font-size:13px;width:60px;text-align:right;color:#000">-1</div>
<div class="a t" style="left:83px;top:647px;font-size:13px;width:60px;text-align:right;color:#000">-1.5</div>
<div class="a t" style="left:83px;top:690px;font-size:13px;width:60px;text-align:right;color:#000">-2</div>
<div class="a t" style="left:117px;top:701px;font-size:13px;width:60px;text-align:center;color:#000">1</div>
<div class="a t" style="left:171px;top:701px;font-size:13px;width:60px;text-align:center;color:#000">1.5</div>
<div class="a t" style="left:225px;top:701px;font-size:13px;width:60px;text-align:center;color:#000">2</div>
<div class="a t" style="left:279px;top:701px;font-size:13px;width:60px;text-align:center;color:#000">2.5</div>
<div class="a t" style="left:334px;top:701px;font-size:13px;width:60px;text-align:center;color:#000">3</div>
<div class="a t" style="left:388px;top:701px;font-size:13px;width:60px;text-align:center;color:#000">3.5</div>
<div class="a t" style="left:442px;top:701px;font-size:13px;width:60px;text-align:center;color:#000">4</div>
<div class="a t" style="left:496px;top:701px;font-size:13px;width:60px;text-align:center;color:#000">4.5</div>
<div class="a t" style="left:551px;top:701px;font-size:13px;width:60px;text-align:center;color:#000">5</div>
<div class="a t" style="left:638px;top:597px;font-family:Liberation Serif;font-size:11px;color:#000">H3</div>
<div class="a t" style="left:638px;top:682px;font-family:Liberation Serif;font-size:11px;color:#000">H4</div>
<div class="a" style="left:254px;top:749px;width:8px;height:6px;background:linear-gradient(to right,#fff,#d4d0c8);"></div>
<div class="a" style="left:262px;top:749px;width:1px;height:6px;background:#404040;"></div>
<div class="a" style="left:609px;top:749px;width:15px;height:6px;background:#d4d0c8;"></div>
<div class="a" style="left:624px;top:749px;width:2px;height:6px;background:#404040;"></div>
<div class="a" style="left:626px;top:749px;width:2px;height:6px;background:#fff;"></div>
<div class="a" style="left:628px;top:749px;width:1px;height:6px;background:#404040;"></div>
<div class="a" style="left:629px;top:749px;width:4px;height:6px;background:#d4d0c8;"></div>
<div class="a" style="left:633px;top:749px;width:3px;height:6px;background:#fff;"></div>
<div class="a" style="left:636px;top:746px;width:2px;height:9px;background:#404040;"></div>
<div class="a" style="left:632px;top:746px;width:4px;height:3px;background:#d4d0c8;"></div>
<svg class="a" style="left:638px;top:749px" width="20" height="6" shape-rendering="crispEdges"><rect x="2" y="2" width="2" height="1" fill="#000"/><rect x="4" y="3" width="2" height="1" fill="#000"/><rect x="5" y="4" width="2" height="2" fill="#000"/><rect x="9" y="2" width="2" height="1" fill="#000"/><rect x="11" y="3" width="2" height="1" fill="#000"/><rect x="12" y="4" width="2" height="2" fill="#000"/></svg>
</body></html>
